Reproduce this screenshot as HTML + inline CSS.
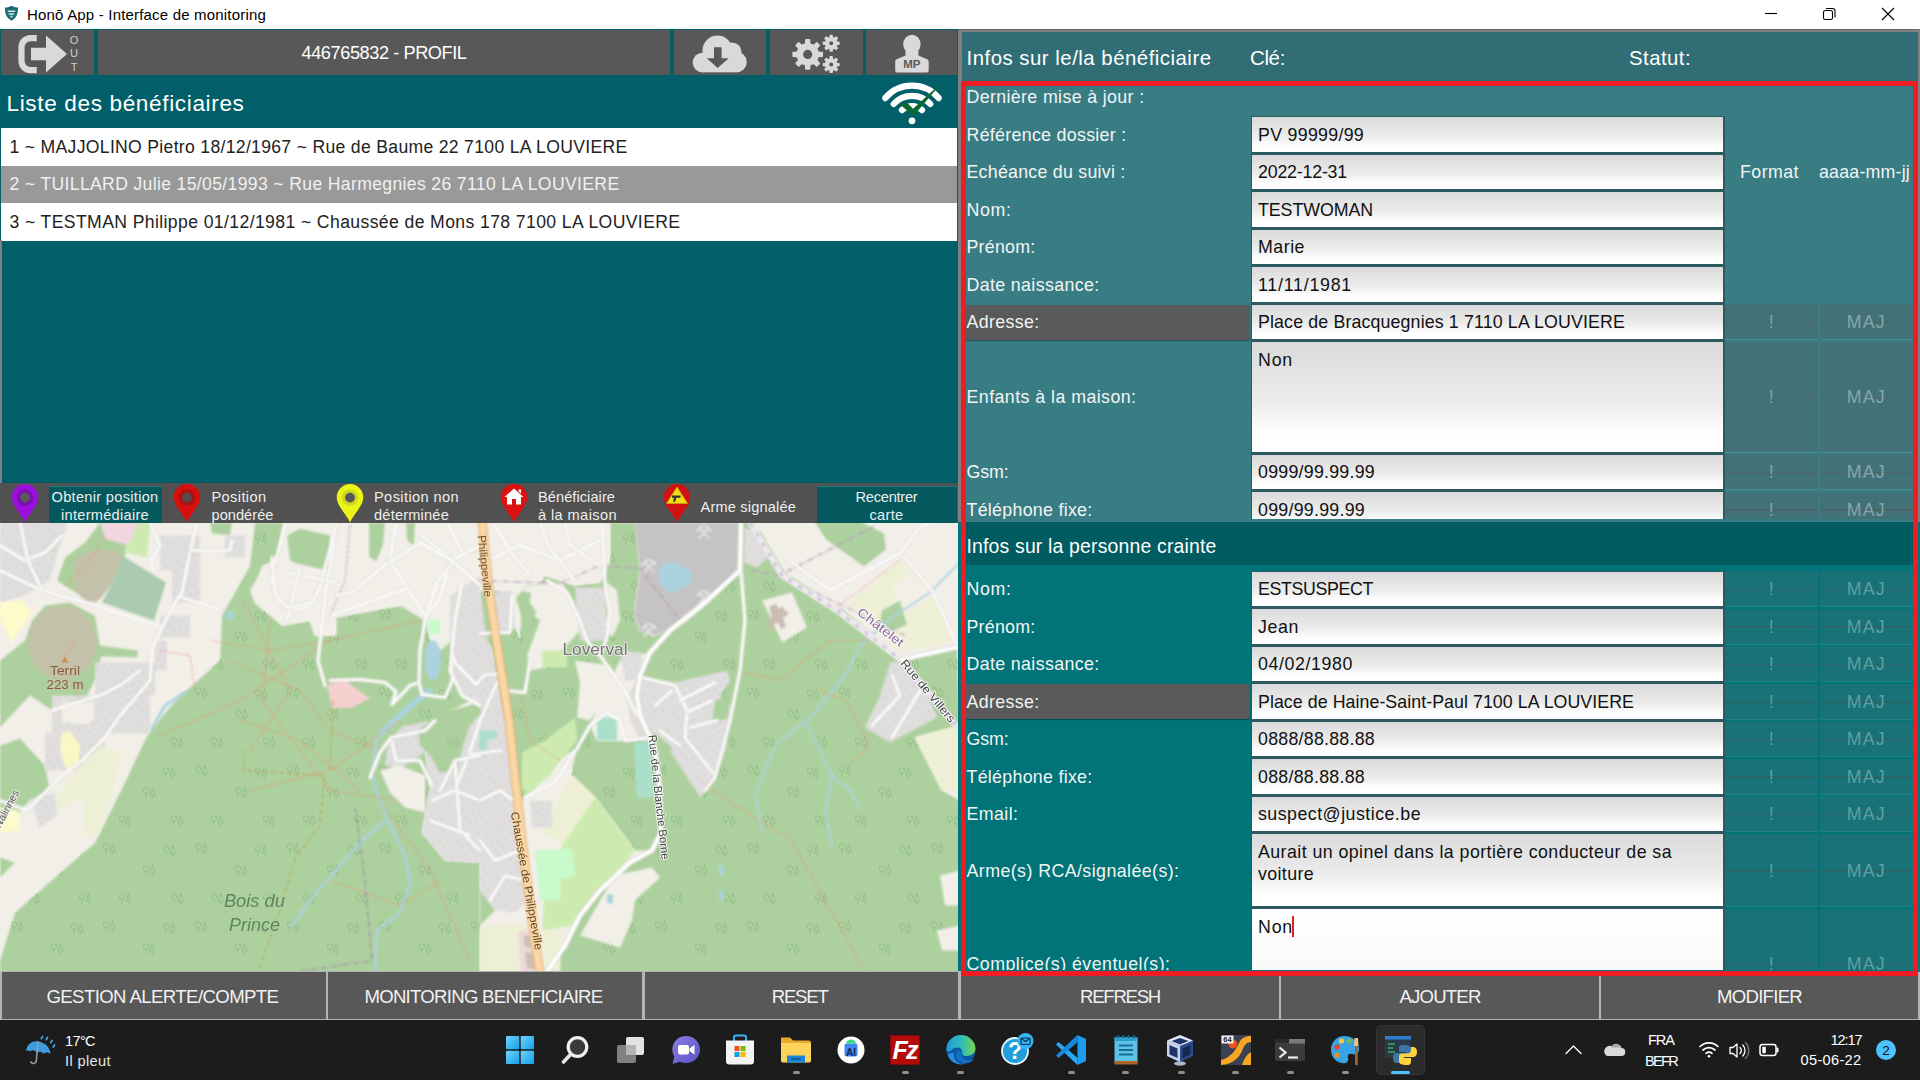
<!DOCTYPE html>
<html lang="fr"><head><meta charset="utf-8"><title>Honō App - Interface de monitoring</title>
<style>

html,body{margin:0;padding:0;background:#fff;}
body{width:1920px;height:1080px;overflow:hidden;font-family:"Liberation Sans",sans-serif;}
#root{position:relative;width:1920px;height:1080px;overflow:hidden;background:#005f69;}
.a{position:absolute;}
.t{position:absolute;white-space:nowrap;}
.g{background:#585858;}
.inp{position:absolute;left:1251px;width:473.500px;box-sizing:border-box;border:1px solid #2c5a60;border-bottom-width:2px;border-right-width:2px;background:linear-gradient(#dadada 0%,#ececec 55%,#ffffff 85%,#ffffff 100%);}
.mb{position:absolute;box-sizing:border-box;}
svg{position:absolute;display:block;}

</style></head><body>
<div id="root">
<div class="a" style="left:0;top:0;width:1920px;height:29px;background:#fff"></div>
<svg style="left:4.300px;top:4.800px" width="15" height="16.500" viewBox="0 0 16 17"><path d="M8 0.5 C10.5 2 13 2.4 15 2.4 C15 9 13.5 13.5 8 16.5 C2.500 13.5 1 9 1 2.4 C3 2.4 5.500 2 8 0.5Z" fill="#1d6b74"/><path d="M4 5.500h8v1.6H4zM5 8.6h6v1.400H5z" fill="#cfe6e8"/><circle cx="8" cy="12" r="1.2" fill="#cfe6e8"/></svg>
<span id="t0" class="t " style="font-size:15px;color:#000;top:6.30px;line-height:18.00px;letter-spacing:0.187px;left:27px;">Honō App - Interface de monitoring</span>
<svg style="left:1760px;top:0" width="160" height="29" viewBox="1760 0 160 29" fill="none" stroke="#000" stroke-width="1.1">
<path d="M1765 13.500H1777"/>
<rect x="1823.5" y="10.500" width="9" height="9" rx="1.800"/><path d="M1826 8.5h6.500a2.500 2.500 0 0 1 2.500 2.500v6.500"/>
<path d="M1882 8L1894 20M1894 8L1882 20"/></svg>
<div class="a g" style="left:1px;top:30px;width:93px;height:45px"></div>
<div class="a g" style="left:97.5px;top:30px;width:572.5px;height:45px"></div>
<div class="a g" style="left:673.5px;top:30px;width:92.5px;height:45px"></div>
<div class="a g" style="left:770px;top:30px;width:92.5px;height:45px"></div>
<div class="a g" style="left:865.5px;top:30px;width:91.5px;height:45px"></div>
<svg style="left:0;top:30px" width="100" height="46" viewBox="0 30 100 46">
<path d="M36.8 38.1H30.5a9 9 0 0 0 -9 9v14a9 9 0 0 0 9 9h6.3" fill="none" stroke="#d9d9d9" stroke-width="6.2"/>
<path d="M31 47.700H46V35.400L67 54L46 72.600V60.300H31Z" fill="#d9d9d9"/>
<g font-family="Liberation Sans,sans-serif" font-size="11" fill="#cfcfcf" text-anchor="middle"><text x="74" y="44">O</text><text x="74" y="57">U</text><text x="74" y="70.500">T</text></g></svg>
<span id="t1" class="t " style="font-size:18.2px;color:#fff;top:42.88px;line-height:21.84px;letter-spacing:-0.438px;left:384px;transform:translateX(-50%);">446765832 - PROFIL</span>
<svg style="left:680px;top:30px" width="90" height="46" viewBox="680 30 90 46">
<g fill="#d9d9d9"><circle cx="717.5" cy="50.500" r="15"/><circle cx="732" cy="52" r="9.500"/><circle cx="702.5" cy="62.500" r="9.800"/><circle cx="736.5" cy="62" r="10.300"/><rect x="702" y="55" width="35" height="17.300"/></g>
<path d="M714 47.300h7.600v11h7.200L717.600 68 706.800 58.300h7.200Z" fill="#585858"/></svg>
<svg style="left:780px;top:30px" width="80" height="46" viewBox="780 30 80 46"><path d="M805.7 44.0L805.9 39.9L809.5 39.9L809.7 44.0L813.7 45.6L816.7 42.9L819.2 45.4L816.5 48.4L818.1 52.4L822.2 52.6L822.2 56.2L818.1 56.4L816.5 60.4L819.2 63.4L816.7 65.9L813.7 63.2L809.7 64.8L809.5 68.9L805.9 68.9L805.7 64.8L801.7 63.2L798.7 65.9L796.2 63.4L798.9 60.4L797.3 56.4L793.2 56.2L793.2 52.6L797.3 52.4L798.9 48.4L796.2 45.4L798.7 42.9L801.7 45.6ZM813.1 54.4a5.4 5.4 0 1 0 -10.8 0a5.4 5.4 0 1 0 10.8 0Z" fill="#d9d9d9" fill-rule="evenodd" stroke="#d9d9d9" stroke-width="1.6" stroke-linejoin="round"/><path d="M830.2 37.7L830.3 35.5L832.1 35.5L832.2 37.7L834.4 38.6L836.0 37.1L837.3 38.4L835.8 40.0L836.7 42.2L838.9 42.3L838.9 44.1L836.7 44.2L835.8 46.4L837.3 48.0L836.0 49.3L834.4 47.8L832.2 48.7L832.1 50.9L830.3 50.9L830.2 48.7L828.0 47.8L826.4 49.3L825.1 48.0L826.6 46.4L825.7 44.2L823.5 44.1L823.5 42.3L825.7 42.2L826.6 40.0L825.1 38.4L826.4 37.1L828.0 38.6ZM834.0 43.2a2.8 2.8 0 1 0 -5.6 0a2.8 2.8 0 1 0 5.6 0Z" fill="#d9d9d9" fill-rule="evenodd" stroke="#d9d9d9" stroke-width="1.6" stroke-linejoin="round"/><path d="M830.2 59.1L830.3 56.9L832.1 56.9L832.2 59.1L834.4 60.0L836.0 58.5L837.3 59.8L835.8 61.4L836.7 63.6L838.9 63.7L838.9 65.5L836.7 65.6L835.8 67.8L837.3 69.4L836.0 70.7L834.4 69.2L832.2 70.1L832.1 72.3L830.3 72.3L830.2 70.1L828.0 69.2L826.4 70.7L825.1 69.4L826.6 67.8L825.7 65.6L823.5 65.5L823.5 63.7L825.7 63.6L826.6 61.4L825.1 59.8L826.4 58.5L828.0 60.0ZM834.0 64.6a2.8 2.8 0 1 0 -5.6 0a2.8 2.8 0 1 0 5.6 0Z" fill="#d9d9d9" fill-rule="evenodd" stroke="#d9d9d9" stroke-width="1.6" stroke-linejoin="round"/></svg>
<svg style="left:880px;top:30px" width="70" height="46" viewBox="880 30 70 46">
<g fill="#d9d9d9"><ellipse cx="911.9" cy="44.300" rx="8.700" ry="9.500"/><path d="M905.5 50v5.500l-8.300 3.500c-1.500 .6-2 1.500-2 3v8.500c0 1.200 .8 2 2 2h29.500c1.200 0 2-.8 2-2V62c0-1.500-.5-2.400-2-3l-8.300-3.500V50Z"/></g>
<text x="911.9" y="68.300" font-family="Liberation Sans,sans-serif" font-size="11.5" font-weight="bold" fill="#585858" text-anchor="middle">MP</text></svg>
<span id="t2" class="t " style="font-size:22.6px;color:#fff;top:90.24px;line-height:27.12px;letter-spacing:0.628px;left:6.5px;">Liste des bénéficiaires</span>
<svg style="left:875px;top:78px" width="75" height="50" viewBox="875 78 75 50"><g fill="none" stroke="#fff" stroke-width="6.200" stroke-linecap="round"><path d="M885.3 98.1A34.8 34.8 0 0 1 938.7 98.1"/><path d="M893.7 104.0A24.6 24.6 0 0 1 930.3 104.0"/><path d="M902.0 110.1A14.4 14.4 0 0 1 922.0 110.1"/></g><circle cx="912" cy="120.800" r="3.400" fill="#fff"/><path d="M900.3 104.800L907 102.600L913 108.800L942.800 81.500L913.500 116Z" fill="#0b6a2e"/></svg>
<div class="a" style="left:1px;top:128px;width:956px;height:37.700px;background:#fff"></div>
<div class="a" style="left:1px;top:165.700px;width:956px;height:37.500px;background:#999"></div>
<div class="a" style="left:1px;top:203.200px;width:956px;height:37.500px;background:#fff"></div>
<span id="t3" class="t " style="font-size:17.6px;color:#222;top:136.74px;line-height:21.12px;letter-spacing:0.310px;left:9.5px;">1 ~ MAJJOLINO Pietro 18/12/1967 ~ Rue de Baume 22 7100 LA LOUVIERE</span>
<span id="t4" class="t " style="font-size:17.6px;color:#f0f0f0;top:174.24px;line-height:21.12px;letter-spacing:0.346px;left:9.5px;">2 ~ TUILLARD Julie 15/05/1993 ~ Rue Harmegnies 26 7110 LA LOUVIERE</span>
<span id="t5" class="t " style="font-size:17.6px;color:#222;top:211.74px;line-height:21.12px;letter-spacing:0.391px;left:9.5px;">3 ~ TESTMAN Philippe 01/12/1981 ~ Chaussée de Mons 178 7100 LA LOUVIERE</span>
<div class="a" style="left:0;top:482.500px;width:957.500px;height:40.300px;background:#515151;box-shadow:0 1px 2px rgba(0,0,0,.5)"></div>
<svg style="left:10.5px;top:484px" width="28" height="39" viewBox="-14 0 28 39"><path d="M0 38.500C-3 31-13.300 22-13.300 13.300A13.300 13.300 0 0 1 13.300 13.300C13.300 22 3 31 0 38.500Z" fill="#9a0fdc"/><circle cx="0" cy="13.600" r="8.200" fill="#7a10b0"/><circle cx="0" cy="13.600" r="4.900" fill="#5a5a5a"/></svg>
<div class="a" style="left:49px;top:485.500px;width:113px;height:37px;background:#03595e;border-top:1px solid #147a7f;box-sizing:border-box"></div>
<span id="t6" class="t " style="font-size:14.6px;color:#eee;top:488.54px;line-height:17.52px;letter-spacing:0.299px;left:105px;transform:translateX(-50%);">Obtenir position</span>
<span id="t7" class="t " style="font-size:14.6px;color:#eee;top:507.04px;line-height:17.52px;letter-spacing:0.280px;left:105px;transform:translateX(-50%);">intermédiaire</span>
<svg style="left:173px;top:484px" width="28" height="39" viewBox="-14 0 28 39"><path d="M0 38.500C-3 31-13.300 22-13.300 13.300A13.300 13.300 0 0 1 13.300 13.300C13.300 22 3 31 0 38.500Z" fill="#d80f0f"/><circle cx="0" cy="13.600" r="8.200" fill="#a81414"/><circle cx="0" cy="13.600" r="4.900" fill="#5a4a4a"/></svg>
<span id="t8" class="t " style="font-size:14.6px;color:#eee;top:488.54px;line-height:17.52px;letter-spacing:0.385px;left:211.5px;">Position</span>
<span id="t9" class="t " style="font-size:14.6px;color:#eee;top:507.04px;line-height:17.52px;letter-spacing:0.039px;left:211.5px;">pondérée</span>
<svg style="left:336px;top:484px" width="28" height="39" viewBox="-14 0 28 39"><path d="M0 38.500C-3 31-13.300 22-13.300 13.300A13.300 13.300 0 0 1 13.300 13.300C13.300 22 3 31 0 38.500Z" fill="#eaf516"/><circle cx="0" cy="13.600" r="8.200" fill="#cfd820"/><circle cx="0" cy="13.600" r="4.900" fill="#555"/></svg>
<span id="t10" class="t " style="font-size:14.6px;color:#eee;top:488.54px;line-height:17.52px;letter-spacing:0.389px;left:374px;">Position non</span>
<span id="t11" class="t " style="font-size:14.6px;color:#eee;top:507.04px;line-height:17.52px;letter-spacing:0.198px;left:374px;">déterminée</span>
<svg style="left:499.5px;top:484px" width="28" height="39" viewBox="-14 0 28 39"><path d="M0 38.500C-3 31-13.300 22-13.300 13.300A13.300 13.300 0 0 1 13.300 13.300C13.300 22 3 31 0 38.500Z" fill="#dc1111"/><path d="M0 4.500L-9.500 13h2.500v7.500h5v-5.500h4v5.500h5V13h2.500Z" fill="#fff"/><path d="M4.500 5.500h2.500v4l-2.500-2.200Z" fill="#fff"/></svg>
<span id="t12" class="t " style="font-size:14.6px;color:#eee;top:488.54px;line-height:17.52px;letter-spacing:0.061px;left:538px;">Bénéficiaire</span>
<span id="t13" class="t " style="font-size:14.6px;color:#eee;top:507.04px;line-height:17.52px;letter-spacing:0.396px;left:538px;">à la maison</span>
<svg style="left:663px;top:484px" width="28" height="39" viewBox="-14 0 28 39"><path d="M0 38.500C-3 31-13.300 22-13.300 13.300A13.300 13.300 0 0 1 13.300 13.300C13.300 22 3 31 0 38.500Z" fill="#d01212"/><path d="M0 3L10.500 19.500H-10.500Z" fill="#f2dd12" stroke="#caa50a" stroke-width=".8"/><path d="M-5 11.500h8.500v2.200h-4.300l-1 4h-2.200l1-4h-2Z" fill="#333"/></svg>
<span id="t14" class="t " style="font-size:14.6px;color:#eee;top:498.54px;line-height:17.52px;letter-spacing:0.169px;left:700.5px;">Arme signalée</span>
<div class="a" style="left:817px;top:485.500px;width:140px;height:37px;background:#03595e;border-top:1px solid #147a7f;box-sizing:border-box"></div>
<span id="t15" class="t " style="font-size:14.6px;color:#eee;top:488.54px;line-height:17.52px;letter-spacing:-0.231px;left:886.5px;transform:translateX(-50%);">Recentrer</span>
<span id="t16" class="t " style="font-size:14.6px;color:#eee;top:507.04px;line-height:17.52px;letter-spacing:0.309px;left:886.5px;transform:translateX(-50%);">carte</span>
<div class="a" style="left:0;top:971px;width:1920px;height:49px;background:#b4b4b4"></div>
<div class="a" style="left:0;top:240px;width:2px;height:242.500px;background:#808080"></div>
<div class="a g" style="left:2px;top:972px;width:323.5px;height:46.500px"></div><span id="t17" class="t " style="font-size:18.6px;color:#f2f2f2;top:985.64px;line-height:22.32px;letter-spacing:-0.597px;left:162.45px;transform:translateX(-50%);">GESTION ALERTE/COMPTE</span>
<div class="a g" style="left:327.5px;top:972px;width:314.5px;height:46.500px"></div><span id="t18" class="t " style="font-size:18.6px;color:#f2f2f2;top:985.64px;line-height:22.32px;letter-spacing:-0.732px;left:483.45px;transform:translateX(-50%);">MONITORING BENEFICIAIRE</span>
<div class="a g" style="left:644.5px;top:972px;width:313.0px;height:46.500px"></div><span id="t19" class="t " style="font-size:18.6px;color:#f2f2f2;top:985.64px;line-height:22.32px;letter-spacing:-1.200px;left:799.7px;transform:translateX(-50%);">RESET</span>
<div class="a" style="left:0;top:522.500px;width:957.500px;height:448.500px;overflow:hidden;background:#f2efe9">
<svg style="left:-10px;top:-10px;" width="977.500" height="468.500" viewBox="-10 512.500 977.500 468.500">
<defs><pattern id="tr" width="92" height="78" patternUnits="userSpaceOnUse" patternTransform="translate(10 530)">
<g fill="none" stroke="#93bd89" stroke-width="0.950">
<g><circle cx="4" cy="4" r="2.800"/><path d="M4 6.800V11.500"/><path d="M10.500 0.500L8 9h5ZM10.500 9v2.500"/></g><g transform="translate(40 22)"><circle cx="4" cy="4" r="2.800"/><path d="M4 6.800V11.500"/><path d="M10.500 0.500L8 9h5ZM10.500 9v2.500"/></g><g transform="translate(68 50)"><circle cx="4" cy="4" r="2.800"/><path d="M4 6.800V11.500"/><path d="M10.500 0.500L8 9h5ZM10.500 9v2.500"/></g><g transform="translate(16 50)"><circle cx="4" cy="4" r="2.800"/><path d="M4 6.800V11.500"/><path d="M10.500 0.500L8 9h5ZM10.500 9v2.500"/></g><g transform="translate(60 2)"><circle cx="4" cy="4" r="2.800"/><path d="M4 6.800V11.500"/><path d="M10.500 0.500L8 9h5ZM10.500 9v2.500"/></g>
</g></pattern>
<pattern id="hs" width="11" height="9" patternUnits="userSpaceOnUse" patternTransform="rotate(18)"><rect x="1" y="1" width="2.400" height="1.800" fill="#d8cbc4"/><rect x="6.500" y="5" width="2.200" height="2" fill="#dacfc9"/></pattern>
<filter id="bl1" x="-2%" y="-2%" width="104%" height="104%"><feGaussianBlur stdDeviation="0.8"/></filter><filter id="bl2" x="-2%" y="-2%" width="104%" height="104%"><feGaussianBlur stdDeviation="0.4"/></filter>
</defs>
<g filter="url(#bl1)">
<rect x="-10" y="510" width="980" height="475" fill="#f2efe9"/>
<polygon points="255,522 283,522 278,557 265,565 250,590 255,603 282,625 310,620 315,635 335,635 335,617 362,612 400,605 425,620 430,640 440,650 452,640 470,650 480,640 480,590 500,590 520,640 522,600 517,602 527,585 540,584 545,575 560,580 575,585 600,582 610,560 610,522 636,522 640,570 634,615 640,630 655,635 687,620 720,590 735,570 741,552 741,522 752,522 782,575 837,610 850,600 880,585 900,600 905,612 902,657 957,647 960,725 915,737 942,790 960,800 960,975 547,975 565,945 580,915 600,890 630,862 652,850 661,832 659,782 655,750 650,737 640,715 637,695 640,675 650,652 620,660 600,700 590,725 572,757 575,750 562,755 525,797 521,800 512,760 500,700 492,650 487,640 470,700 452,710 440,740 425,750 430,787 422,832 445,860 480,862 480,975 0,975 0,960 15,912 95,842 100,832 125,782 140,750 150,730 180,695 190,687 220,660 222,615 235,592 250,565" fill="#add19e" />
<polygon points="575,750 590,725 597,740 650,740 655,750 659,782 661,832 652,850 635,850 595,797 572,775" fill="#add19e" />
<polygon points="57,580 65,557 85,542 100,522 132,522 125,555 117,570 100,595 75,592" fill="#add19e" />
<polygon points="32,620 45,605 70,602 95,615 100,645 138,650 137,657 101,656 99,668 95,680 82,705 52,710 30,695 0,727 0,660 25,640" fill="#add19e" />
<polygon points="0,745 20,738 45,765 50,790 30,800 15,815 0,812" fill="#add19e" />
<polygon points="0,857 15,862 0,877" fill="#add19e" />
<polygon points="287,535 300,528 330,535 330,568 305,572 290,560" fill="#add19e" />
<polygon points="405,560 425,550 440,565 430,590 410,585" fill="#add19e" />
<polygon points="372,580 385,575 392,598 378,600" fill="#add19e" />
<polygon points="210,522 232,522 230,535 212,533" fill="#add19e" />
<polygon points="814,520 858,520 884,533 886,549 864,566 826,539" fill="#add19e" />
<polygon points="882,610 900,600 907,624 892,631 880,620" fill="#add19e" />
<polygon points="760,560 782,575 800,590 792,592 762,600 772,620 782,642 807,627 815,640 750,660 745,620 741,570" fill="#add19e" />
</g><g>
<polygon points="255,522 283,522 278,557 265,565 250,590 255,603 282,625 310,620 315,635 335,635 335,617 362,612 400,605 425,620 430,640 440,650 452,640 470,650 480,640 480,590 500,590 520,640 522,600 517,602 527,585 540,584 545,575 560,580 575,585 600,582 610,560 610,522 636,522 640,570 634,615 640,630 655,635 687,620 720,590 735,570 741,552 741,522 752,522 782,575 837,610 850,600 880,585 900,600 905,612 902,657 957,647 960,725 915,737 942,790 960,800 960,975 547,975 565,945 580,915 600,890 630,862 652,850 661,832 659,782 655,750 650,737 640,715 637,695 640,675 650,652 620,660 600,700 590,725 572,757 575,750 562,755 525,797 521,800 512,760 500,700 492,650 487,640 470,700 452,710 440,740 425,750 430,787 422,832 445,860 480,862 480,975 0,975 0,960 15,912 95,842 100,832 125,782 140,750 150,730 180,695 190,687 220,660 222,615 235,592 250,565" fill="url(#tr)" />
<polygon points="575,750 590,725 597,740 650,740 655,750 659,782 661,832 652,850 635,850 595,797 572,775" fill="url(#tr)" />
</g><g filter="url(#bl1)">
<polygon points="132,522 150,522 147,557 125,552" fill="#cdebb0" />
<polygon points="0,602 22,600 32,612 12,642 0,620" fill="#fdfbc9" />
<polygon points="122,555 166,582 154,620 102,602 116,574" fill="#aacbaf" />
<path d="M77 557C90 548 112 545 122 556C118 575 105 595 97 601C88 603 76 596 75 585C73 575 74 565 77 557Z" fill="#c4c1aa"/>
<polygon points="100,522 138,522 128,545 105,538" fill="#f1d6e0" />
<ellipse cx="62" cy="642" rx="34" ry="37" fill="#c4c1aa"/>
<polygon points="0,522 68,522 58,552 50,580 25,595 0,602" fill="#e0dfdf" /><polygon points="0,522 68,522 58,552 50,580 25,595 0,602" fill="url(#hs)"/>
<rect x="160" y="535" width="40" height="35" fill="#e0dfdf"/><rect x="160" y="535" width="40" height="35" fill="url(#hs)"/>
<rect x="172" y="567" width="28" height="35" fill="#e0dfdf"/><rect x="172" y="567" width="28" height="35" fill="url(#hs)"/>
<rect x="160" y="615" width="30" height="22" fill="#e0dfdf"/><rect x="160" y="615" width="30" height="22" fill="url(#hs)"/>
<rect x="225" y="535" width="20" height="22" fill="#e0dfdf"/><rect x="225" y="535" width="20" height="22" fill="url(#hs)"/>
<rect x="95" y="662" width="60" height="33" fill="#e0dfdf"/><rect x="95" y="662" width="60" height="33" fill="url(#hs)"/>
<rect x="52" y="695" width="98" height="38" fill="#e0dfdf"/><rect x="52" y="695" width="98" height="38" fill="url(#hs)"/>
<rect x="45" y="732" width="60" height="38" fill="#e0dfdf"/><rect x="45" y="732" width="60" height="38" fill="url(#hs)"/>
<rect x="155" y="640" width="12" height="30" fill="#e0dfdf"/><rect x="155" y="640" width="12" height="30" fill="url(#hs)"/>
<polygon points="450,595 480,575 480,700 462,695 450,670" fill="#e0dfdf" /><polygon points="450,595 480,575 480,700 462,695 450,670" fill="url(#hs)"/>
<polygon points="455,715 480,700 480,790 440,790 455,745" fill="#e0dfdf" /><polygon points="455,715 480,700 480,790 440,790 455,745" fill="url(#hs)"/>
<polygon points="425,750 480,750 480,862 445,860 422,832 430,787" fill="#e0dfdf" /><polygon points="425,750 480,750 480,862 445,860 422,832 430,787" fill="url(#hs)"/>
<polygon points="388,742 402,726 452,716 480,700 480,760 425,752 400,768 385,765" fill="#e0dfdf" /><polygon points="388,742 402,726 452,716 480,700 480,760 425,752 400,768 385,765" fill="url(#hs)"/>
<polygon points="380,770 400,765 425,775 425,812 405,807 390,792" fill="#f2efe9" />
<polygon points="255,590 262,565 285,560 335,572 337,635 315,635 310,620 282,625" fill="#f2efe9" />
<polygon points="335,522 480,522 480,575 450,595 437,582 425,600 400,605 362,612 335,617" fill="#f2efe9" />
<polygon points="480,522 610,522 610,560 600,582 575,585 545,575 500,590 480,590" fill="#f2efe9" />
<polygon points="480,590 487,640 492,650 500,700 512,760 521,800 527,900 515,912 495,910 480,890" fill="#e0dfdf" /><polygon points="480,590 487,640 492,650 500,700 512,760 521,800 527,900 515,912 495,910 480,890" fill="url(#hs)"/>
<polygon points="480,925 530,925 540,975 480,975" fill="#eef0d5" />
<polygon points="480,890 495,910 480,925" fill="#add19e" />
<polygon points="418,730 440,712 470,705 477,700 482,712 470,725 463,745 458,768 440,772 430,755 420,745" fill="#add19e" />
<polygon points="418,730 440,712 470,705 477,700 482,712 470,725 463,745 458,768 440,772 430,755 420,745" fill="url(#tr)" />
<polygon points="479,730 497,730 497,738 488,739 486,750 479,750" fill="#aae0cb" />
<polygon points="527,585 562,582 575,602 580,630 562,650 557,665 530,670 527,655 540,620 517,602" fill="#f2efe9" />
<polygon points="575,587 605,587 607,640 580,640" fill="#e0dfdf" /><polygon points="575,587 605,587 607,640 580,640" fill="url(#hs)"/>
<polygon points="607,582 617,590 620,620 612,637 605,625 610,602" fill="#f2efe9" />
<polygon points="575,660 610,665 620,680 605,695 590,720 577,717 580,682" fill="#f2efe9" />
<polygon points="620,650 642,652 640,680 625,680" fill="#e0dfdf" /><polygon points="620,650 642,652 640,680 625,680" fill="url(#hs)"/>
<polygon points="542,650 567,650 567,667 542,667" fill="#cdebb0" />
<polygon points="545,740 575,717 577,740 555,767 522,790 522,752" fill="#cdebb0" />
<polygon points="595,690 620,688 622,740 597,740" fill="#f2efe9" />
<polygon points="597,717 617,717 617,740 597,740" fill="#aae0cb" />
<polygon points="634,742 650,742 654,797 637,797" fill="#aae0cb" />
<polygon points="640,675 675,682 727,670 730,680 720,695 730,705 727,745 715,780 700,797 670,745 655,732 640,740 630,720 627,695" fill="#e0dfdf" /><polygon points="640,675 675,682 727,670 730,680 720,695 730,705 727,745 715,780 700,797 670,745 655,732 640,740 630,720 627,695" fill="url(#hs)"/>
<polygon points="715,700 730,695 728,718 712,722" fill="#add19e" />
<polygon points="745,527 755,532 769,556 757,567 744,562" fill="#e0dfdf" /><polygon points="745,527 755,532 769,556 757,567 744,562" fill="url(#hs)"/>
<path d="M760 530L787 577L836 597L893 558" fill="none" stroke="#add19e" stroke-width="4.500" stroke-linejoin="round"/>
<polygon points="369,522 385,522 383,545 376,561 369,556" fill="#add19e" />
<polygon points="406,522 415,522 414,545 407,540" fill="#add19e" />
<polygon points="429,619 440,619 440,634 429,634" fill="#c8facc" />
<polygon points="492,592 513,590 515,628 497,632" fill="#e0dfdf" /><polygon points="492,592 513,590 515,628 497,632" fill="url(#hs)"/>
<polygon points="516,597 522,591 531,592 530,602 537,612 527,622 521,615" fill="#add19e" />
<polygon points="635,522 741,522 741,552 735,570 720,590 687,620 655,635 640,630 634,615 640,570" fill="#c5c3c3" />
<path d="M659 570C660 565 663 562 667 562C675 562 686 566 690 571C694 576 692 581 688 584C682 588 676 592 671 592C666 591 660 585 659 578Z" fill="#aad3df"/>
<g stroke="#e8e6e6" stroke-width="1.600" fill="none" stroke-linecap="round"><path d="M699 538L708 528M709 538L700 528"/><path d="M705.5 525.5L710.5 530M702.5 525.5L697.5 530" stroke-width="2.200"/></g>
<g stroke="#e8e6e6" stroke-width="1.600" fill="none" stroke-linecap="round"><path d="M644 572L653 562M654 572L645 562"/><path d="M650.5 559.5L655.5 564M647.5 559.5L642.5 564" stroke-width="2.200"/></g>
<g stroke="#e8e6e6" stroke-width="1.600" fill="none" stroke-linecap="round"><path d="M699 603L708 593M709 603L700 593"/><path d="M705.5 590.5L710.5 595M702.5 590.5L697.5 595" stroke-width="2.200"/></g>
<g stroke="#e8e6e6" stroke-width="1.600" fill="none" stroke-linecap="round"><path d="M644 636L653 626M654 636L645 626"/><path d="M650.5 623.5L655.5 628M647.5 623.5L642.5 628" stroke-width="2.200"/></g>
<polygon points="762,600 792,592 807,627 782,642 772,620" fill="#f2efe9" />
<polygon points="769,606 776,603 778,608 783,606 785,611 787,610 788,614 783,617 786,626 781,629 778,622 774,624 775,629 771,630 768,620 772,617" fill="#c9bcb1" />
<polygon points="755,522 960,522 960,647 902,657 840,607 785,572" fill="#f2efe9" />
<polygon points="814,520 858,520 884,533 886,549 864,566 826,539" fill="#add19e" />
<polygon points="847,604 900,561 911,570 935,595 956,640 901,652" fill="#eef0d5" />
<polygon points="893,585 910,572 935,595 905,612 897,600" fill="#f2efe9" />
<polygon points="882,610 900,600 907,624 892,631 880,620" fill="#add19e" />
<polygon points="915,737 960,725 960,790 942,790" fill="#eef0d5" />
<polygon points="925,750 960,750 960,795" fill="#eef0d5" />
<polygon points="890,662 905,660 930,700 937,717 890,742 865,727 880,695" fill="#e0dfdf" /><polygon points="890,662 905,660 930,700 937,717 890,742 865,727 880,695" fill="url(#hs)"/>
<polygon points="940,875 960,870 960,905 945,905" fill="#f2efe9" />
<polygon points="937,930 960,925 960,950 942,950" fill="#f2efe9" />
<polygon points="62,702 94,702 94,718 88,724 62,722" fill="#f2efe9" />
<polygon points="62,733 70,731 80,745 78,768 66,768 60,750" fill="#fbf8c4" />
<polygon points="100,747 122,750 120,765 85,760 95,752" fill="#eef0d5" />
<polygon points="72,775 85,760 120,765 100,832 85,837 82,795 45,822 57,795" fill="#eef0d5" />
<polygon points="30,800 55,792 57,815 40,827" fill="#e0dfdf" /><polygon points="30,800 55,792 57,815 40,827" fill="url(#hs)"/>
<polygon points="0,807 18,810 20,830 0,832" fill="#fdfbc9" />
<polygon points="522,755 562,755 550,775 525,795" fill="#cdebb0" />
<polygon points="572,775 595,797 562,845 540,832" fill="#eef0d5" />
<polygon points="595,797 635,850 625,862 592,895 575,925 542,930 545,890 562,845" fill="#cdebb0" />
<polygon points="530,800 552,800 552,827 532,827" fill="#e0dfdf" /><polygon points="530,800 552,800 552,827 532,827" fill="url(#hs)"/>
<polygon points="535,850 572,848 575,875 560,880 560,900 540,900" fill="#c8facc" />
<polygon points="542,930 562,930 560,975 547,975" fill="#eef0d5" />
<polygon points="615,875 652,867 660,877 635,900 632,920 620,947 580,935 600,900" fill="#f2efe9" />
<polygon points="670,750 720,750 712,777 700,797" fill="#e0dfdf" /><polygon points="670,750 720,750 712,777 700,797" fill="url(#hs)"/>
<polygon points="327,685 345,680 370,698 352,707 332,708" fill="#f6cfcf" />
<ellipse cx="433" cy="660" rx="8" ry="20" fill="#aad3df"/>
<rect x="226" y="611" width="8" height="8" fill="#aad3df"/>
<path d="M185 692 L165 705 L152 728" fill="none" stroke="#aad3df" stroke-width="3" stroke-linejoin="round" stroke-linecap="round"/>
<path d="M428 690 L420 697 L397 717 L382 732" fill="none" stroke="#aad3df" stroke-width="5.5" stroke-linejoin="round" stroke-linecap="round"/>
<path d="M432 690 L400 717 L377 737 L372 770 L375 787 L390 825 L405 855 L410 882 L400 912 L377 930 L375 971" fill="none" stroke="#aad3df" stroke-width="2.6" stroke-linejoin="round" stroke-linecap="round"/>
<path d="M385 821 L360 842 L312 897 L292 926" fill="none" stroke="#aad3df" stroke-width="2.6" stroke-linejoin="round" stroke-linecap="round"/>
<path d="M960 562 L930 592 L892 617 L860 645 L845 675 L812 715 L775 745 L757 790 L755 792 L762 830" fill="none" stroke="#aad3df" stroke-width="2" stroke-linejoin="round" stroke-linecap="round"/>
<path d="M805 720 L815 740 L832 775 L825 812 L832 845" fill="none" stroke="#aad3df" stroke-width="2" stroke-linejoin="round" stroke-linecap="round"/>
<path d="M832 775 L850 790 L860 807" fill="none" stroke="#aad3df" stroke-width="2" stroke-linejoin="round" stroke-linecap="round"/>
<ellipse cx="721" cy="870" rx="2.500" ry="6" fill="#aad3df"/><ellipse cx="721" cy="895" rx="3" ry="5" fill="#aad3df"/><rect x="607" y="894" width="6" height="9" fill="#aad3df"/>
<path d="M65 585 L90 560 L105 535" fill="none" stroke="#f2876f" stroke-width="1.15" stroke-dasharray="2 2.400" stroke-linejoin="round"/>
<path d="M80 700 L62 660 L75 640" fill="none" stroke="#f2876f" stroke-width="1.15" stroke-dasharray="2 2.400" stroke-linejoin="round"/>
<path d="M160 650 L190 655 L195 690" fill="none" stroke="#f2876f" stroke-width="1.15" stroke-dasharray="2 2.400" stroke-linejoin="round"/>
<path d="M212 640 L270 650 L330 640" fill="none" stroke="#f2876f" stroke-width="1.15" stroke-dasharray="2 2.400" stroke-linejoin="round"/>
<path d="M230 660 L300 690 L330 730 L380 750" fill="none" stroke="#f2876f" stroke-width="1.15" stroke-dasharray="2 2.400" stroke-linejoin="round"/>
<path d="M240 720 L300 740 L360 790" fill="none" stroke="#f2876f" stroke-width="1.15" stroke-dasharray="2 2.400" stroke-linejoin="round"/>
<path d="M160 735 L240 700 L330 640 L420 620" fill="none" stroke="#f2876f" stroke-width="1.15" stroke-dasharray="2 2.400" stroke-linejoin="round"/>
<path d="M250 790 L330 770 L400 720" fill="none" stroke="#f2876f" stroke-width="1.15" stroke-dasharray="2 2.400" stroke-linejoin="round"/>
<path d="M243 600 L290 690 L250 750" fill="none" stroke="#f2876f" stroke-width="1.15" stroke-dasharray="2 2.400" stroke-linejoin="round"/>
<path d="M270 620 L262 700 L330 790 L400 800" fill="none" stroke="#f2876f" stroke-width="1.15" stroke-dasharray="2 2.400" stroke-linejoin="round"/>
<path d="M705 785 L762 822 L790 838 L865 971" fill="none" stroke="#f2876f" stroke-width="1.15" stroke-dasharray="2 2.400" stroke-linejoin="round"/>
<path d="M745 672 L780 680 L830 640 L880 640" fill="none" stroke="#f2876f" stroke-width="1.15" stroke-dasharray="2 2.400" stroke-linejoin="round"/>
<path d="M820 690 L845 700 L870 745 L850 762" fill="none" stroke="#f2876f" stroke-width="1.15" stroke-dasharray="2 2.400" stroke-linejoin="round"/>
<path d="M520 690 L530 740 L560 760" fill="none" stroke="#f2876f" stroke-width="1.15" stroke-dasharray="2 2.400" stroke-linejoin="round"/>
<path d="M380 800 L430 870 L470 960" fill="none" stroke="#f2876f" stroke-width="1.15" stroke-dasharray="2 2.400" stroke-linejoin="round"/>
<path d="M330 880 L400 905 L440 880" fill="none" stroke="#f2876f" stroke-width="1.15" stroke-dasharray="2 2.400" stroke-linejoin="round"/>
<path d="M245 750 L243 770 L325 775 L320 825 L295 858 L280 910 L258 971" fill="none" stroke="#b5a55a" stroke-width="1.2" stroke-dasharray="5 3" stroke-linejoin="round"/>
<path d="M333 700 L330 770" fill="none" stroke="#b5a55a" stroke-width="1.2" stroke-dasharray="5 3" stroke-linejoin="round"/>
<path d="M480 580 L560 583 L600 565 L640 568 L680 620" fill="none" stroke="#b59ac0" stroke-width="1.3" stroke-dasharray="6 2 1.500 2" stroke-linejoin="round"/>
<path d="M752 570 L780 575 L905 635" fill="none" stroke="#b59ac0" stroke-width="1.3" stroke-dasharray="6 2 1.500 2" stroke-linejoin="round"/>
<path d="M787 571 L876 525" fill="none" stroke="#b59ac0" stroke-width="1.6" stroke-dasharray="6 2 1.500 2" stroke-linejoin="round"/>
<path d="M837 607 L901 559" fill="none" stroke="#f2876f" stroke-width="1.15" stroke-dasharray="2 2.400" stroke-linejoin="round"/>
<path d="M350 525 L345 580 L330 615" fill="none" stroke="#b59ac0" stroke-width="1.3" stroke-dasharray="3 2" stroke-linejoin="round"/>
<path d="M355 807 L365 880 L372 960 L300 971" fill="none" stroke="#9a86aa" stroke-width="1.3" stroke-dasharray="5 2 1.500 2" stroke-linejoin="round"/>
<path d="M0 570 L42 590 L95 605 L162 627" fill="none" stroke="#d6d2cc" stroke-width="3.9000000000000004" stroke-linejoin="round" stroke-linecap="round"/><path d="M0 570 L42 590 L95 605 L162 627" fill="none" stroke="#fff" stroke-width="2.7" stroke-linejoin="round" stroke-linecap="round"/>
<path d="M197 522 L190 552 L182 592 L175 602 L162 627 L152 650 L150 680 L140 692 L120 715 L105 737 L82 760 L62 775 L27 810 L0 800" fill="none" stroke="#d6d2cc" stroke-width="3.9000000000000004" stroke-linejoin="round" stroke-linecap="round"/><path d="M197 522 L190 552 L182 592 L175 602 L162 627 L152 650 L150 680 L140 692 L120 715 L105 737 L82 760 L62 775 L27 810 L0 800" fill="none" stroke="#fff" stroke-width="2.7" stroke-linejoin="round" stroke-linecap="round"/>
<path d="M182 597 L220 609" fill="none" stroke="#d6d2cc" stroke-width="3.9000000000000004" stroke-linejoin="round" stroke-linecap="round"/><path d="M182 597 L220 609" fill="none" stroke="#fff" stroke-width="2.7" stroke-linejoin="round" stroke-linecap="round"/>
<path d="M190 550 L230 550 L232 540" fill="none" stroke="#d6d2cc" stroke-width="3.9000000000000004" stroke-linejoin="round" stroke-linecap="round"/><path d="M190 550 L230 550 L232 540" fill="none" stroke="#fff" stroke-width="2.7" stroke-linejoin="round" stroke-linecap="round"/>
<path d="M150 522 L160 545 L150 562 L155 572" fill="none" stroke="#d6d2cc" stroke-width="3.9000000000000004" stroke-linejoin="round" stroke-linecap="round"/><path d="M150 522 L160 545 L150 562 L155 572" fill="none" stroke="#fff" stroke-width="2.7" stroke-linejoin="round" stroke-linecap="round"/>
<path d="M337 522 L331 560 L327 582 L322 625 L318 660 L325 685" fill="none" stroke="#d6d2cc" stroke-width="3.9000000000000004" stroke-linejoin="round" stroke-linecap="round"/><path d="M337 522 L331 560 L327 582 L322 625 L318 660 L325 685" fill="none" stroke="#fff" stroke-width="2.7" stroke-linejoin="round" stroke-linecap="round"/>
<path d="M286 522 L271 577 L277 600 L290 610 L310 606 L321 582 L336 527" fill="none" stroke="#d6d2cc" stroke-width="3.9000000000000004" stroke-linejoin="round" stroke-linecap="round"/><path d="M286 522 L271 577 L277 600 L290 610 L310 606 L321 582 L336 527" fill="none" stroke="#fff" stroke-width="2.7" stroke-linejoin="round" stroke-linecap="round"/>
<path d="M337 595 L352 592 L390 560 L396 522" fill="none" stroke="#d6d2cc" stroke-width="3.9000000000000004" stroke-linejoin="round" stroke-linecap="round"/><path d="M337 595 L352 592 L390 560 L396 522" fill="none" stroke="#fff" stroke-width="2.7" stroke-linejoin="round" stroke-linecap="round"/>
<path d="M390 561 L407 587 L426 617 L419 655" fill="none" stroke="#d6d2cc" stroke-width="3.9000000000000004" stroke-linejoin="round" stroke-linecap="round"/><path d="M390 561 L407 587 L426 617 L419 655" fill="none" stroke="#fff" stroke-width="2.7" stroke-linejoin="round" stroke-linecap="round"/>
<path d="M331 615 L407 588" fill="none" stroke="#d6d2cc" stroke-width="3.9000000000000004" stroke-linejoin="round" stroke-linecap="round"/><path d="M331 615 L407 588" fill="none" stroke="#fff" stroke-width="2.7" stroke-linejoin="round" stroke-linecap="round"/>
<path d="M426 617 L440 597 L452 557 L475 549" fill="none" stroke="#d6d2cc" stroke-width="3.9000000000000004" stroke-linejoin="round" stroke-linecap="round"/><path d="M426 617 L440 597 L452 557 L475 549" fill="none" stroke="#fff" stroke-width="2.7" stroke-linejoin="round" stroke-linecap="round"/>
<path d="M420 534 L452 559" fill="none" stroke="#d6d2cc" stroke-width="3.9000000000000004" stroke-linejoin="round" stroke-linecap="round"/><path d="M420 534 L452 559" fill="none" stroke="#fff" stroke-width="2.7" stroke-linejoin="round" stroke-linecap="round"/>
<path d="M447 522 L462 552" fill="none" stroke="#d6d2cc" stroke-width="3.9000000000000004" stroke-linejoin="round" stroke-linecap="round"/><path d="M447 522 L462 552" fill="none" stroke="#fff" stroke-width="2.7" stroke-linejoin="round" stroke-linecap="round"/>
<path d="M285 572 L337 582" fill="none" stroke="#d6d2cc" stroke-width="3.9000000000000004" stroke-linejoin="round" stroke-linecap="round"/><path d="M285 572 L337 582" fill="none" stroke="#fff" stroke-width="2.7" stroke-linejoin="round" stroke-linecap="round"/>
<path d="M300 567 L287 620" fill="none" stroke="#d6d2cc" stroke-width="3.9000000000000004" stroke-linejoin="round" stroke-linecap="round"/><path d="M300 567 L287 620" fill="none" stroke="#fff" stroke-width="2.7" stroke-linejoin="round" stroke-linecap="round"/>
<path d="M272 557 L275 592 L287 607 L312 602 L322 582" fill="none" stroke="#d6d2cc" stroke-width="3.9000000000000004" stroke-linejoin="round" stroke-linecap="round"/><path d="M272 557 L275 592 L287 607 L312 602 L322 582" fill="none" stroke="#fff" stroke-width="2.7" stroke-linejoin="round" stroke-linecap="round"/>
<path d="M330 680 L360 679 L385 682 L396 691 L392 704 L410 685 L419 682 L420 650 L425 620 L437 582 L457 557 L480 545" fill="none" stroke="#d6d2cc" stroke-width="3.9000000000000004" stroke-linejoin="round" stroke-linecap="round"/><path d="M330 680 L360 679 L385 682 L396 691 L392 704 L410 685 L419 682 L420 650 L425 620 L437 582 L457 557 L480 545" fill="none" stroke="#fff" stroke-width="2.7" stroke-linejoin="round" stroke-linecap="round"/>
<path d="M419 682 L422 694 L445 697 L452 681 L452 650" fill="none" stroke="#d6d2cc" stroke-width="3.9000000000000004" stroke-linejoin="round" stroke-linecap="round"/><path d="M419 682 L422 694 L445 697 L452 681 L452 650" fill="none" stroke="#fff" stroke-width="2.7" stroke-linejoin="round" stroke-linecap="round"/>
<path d="M452 650 L455 662 L476 684 L485 674 L496 674" fill="none" stroke="#d6d2cc" stroke-width="3.9000000000000004" stroke-linejoin="round" stroke-linecap="round"/><path d="M452 650 L455 662 L476 684 L485 674 L496 674" fill="none" stroke="#fff" stroke-width="2.7" stroke-linejoin="round" stroke-linecap="round"/>
<path d="M497 682 L480 720 L469 754 L457 785" fill="none" stroke="#d6d2cc" stroke-width="3.9000000000000004" stroke-linejoin="round" stroke-linecap="round"/><path d="M497 682 L480 720 L469 754 L457 785" fill="none" stroke="#fff" stroke-width="2.7" stroke-linejoin="round" stroke-linecap="round"/>
<path d="M469 754 L501 750" fill="none" stroke="#d6d2cc" stroke-width="3.9000000000000004" stroke-linejoin="round" stroke-linecap="round"/><path d="M469 754 L501 750" fill="none" stroke="#fff" stroke-width="2.7" stroke-linejoin="round" stroke-linecap="round"/>
<path d="M391 737 L425 730 L435 720" fill="none" stroke="#d6d2cc" stroke-width="3.9000000000000004" stroke-linejoin="round" stroke-linecap="round"/><path d="M391 737 L425 730 L435 720" fill="none" stroke="#fff" stroke-width="2.7" stroke-linejoin="round" stroke-linecap="round"/>
<path d="M391 737 L396 760 L420 760 L432 785" fill="none" stroke="#d6d2cc" stroke-width="3.9000000000000004" stroke-linejoin="round" stroke-linecap="round"/><path d="M391 737 L396 760 L420 760 L432 785" fill="none" stroke="#fff" stroke-width="2.7" stroke-linejoin="round" stroke-linecap="round"/>
<path d="M391 737 L380 752 L370 777" fill="none" stroke="#d6d2cc" stroke-width="3.9000000000000004" stroke-linejoin="round" stroke-linecap="round"/><path d="M391 737 L380 752 L370 777" fill="none" stroke="#fff" stroke-width="2.7" stroke-linejoin="round" stroke-linecap="round"/>
<path d="M390 562 L420 542 L452 560 L480 585" fill="none" stroke="#d6d2cc" stroke-width="3.9000000000000004" stroke-linejoin="round" stroke-linecap="round"/><path d="M390 562 L420 542 L452 560 L480 585" fill="none" stroke="#fff" stroke-width="2.7" stroke-linejoin="round" stroke-linecap="round"/>
<path d="M462 582 L455 620 L450 670 L462 695 L480 705" fill="none" stroke="#d6d2cc" stroke-width="3.9000000000000004" stroke-linejoin="round" stroke-linecap="round"/><path d="M462 582 L455 620 L450 670 L462 695 L480 705" fill="none" stroke="#fff" stroke-width="2.7" stroke-linejoin="round" stroke-linecap="round"/>
<path d="M52 710 L100 695 L120 685 L140 670" fill="none" stroke="#d6d2cc" stroke-width="3.9000000000000004" stroke-linejoin="round" stroke-linecap="round"/><path d="M52 710 L100 695 L120 685 L140 670" fill="none" stroke="#fff" stroke-width="2.7" stroke-linejoin="round" stroke-linecap="round"/>
<path d="M0 545 L25 560 L45 552 L62 535" fill="none" stroke="#d6d2cc" stroke-width="3.9000000000000004" stroke-linejoin="round" stroke-linecap="round"/><path d="M0 545 L25 560 L45 552 L62 535" fill="none" stroke="#fff" stroke-width="2.7" stroke-linejoin="round" stroke-linecap="round"/>
<path d="M20 522 L28 560 L42 590" fill="none" stroke="#d6d2cc" stroke-width="3.9000000000000004" stroke-linejoin="round" stroke-linecap="round"/><path d="M20 522 L28 560 L42 590" fill="none" stroke="#fff" stroke-width="2.7" stroke-linejoin="round" stroke-linecap="round"/>
<path d="M440 790 L455 760 L480 755" fill="none" stroke="#d6d2cc" stroke-width="3.9000000000000004" stroke-linejoin="round" stroke-linecap="round"/><path d="M440 790 L455 760 L480 755" fill="none" stroke="#fff" stroke-width="2.7" stroke-linejoin="round" stroke-linecap="round"/>
<path d="M432 800 L455 790 L480 800" fill="none" stroke="#d6d2cc" stroke-width="3.9000000000000004" stroke-linejoin="round" stroke-linecap="round"/><path d="M432 800 L455 790 L480 800" fill="none" stroke="#fff" stroke-width="2.7" stroke-linejoin="round" stroke-linecap="round"/>
<path d="M455 760 L460 830 L480 850" fill="none" stroke="#d6d2cc" stroke-width="3.9000000000000004" stroke-linejoin="round" stroke-linecap="round"/><path d="M455 760 L460 830 L480 850" fill="none" stroke="#fff" stroke-width="2.7" stroke-linejoin="round" stroke-linecap="round"/>
<path d="M430 820 L470 835" fill="none" stroke="#d6d2cc" stroke-width="3.9000000000000004" stroke-linejoin="round" stroke-linecap="round"/><path d="M430 820 L470 835" fill="none" stroke="#fff" stroke-width="2.7" stroke-linejoin="round" stroke-linecap="round"/>
<path d="M602 522 L605 582 L610 615 L607 637 L600 655" fill="none" stroke="#d6d2cc" stroke-width="3.9000000000000004" stroke-linejoin="round" stroke-linecap="round"/><path d="M602 522 L605 582 L610 615 L607 637 L600 655" fill="none" stroke="#fff" stroke-width="2.7" stroke-linejoin="round" stroke-linecap="round"/>
<path d="M547 580 L567 592 L580 620 L587 640 L600 655 L625 690 L637 715" fill="none" stroke="#d6d2cc" stroke-width="3.9000000000000004" stroke-linejoin="round" stroke-linecap="round"/><path d="M547 580 L567 592 L580 620 L587 640 L600 655 L625 690 L637 715" fill="none" stroke="#fff" stroke-width="2.7" stroke-linejoin="round" stroke-linecap="round"/>
<path d="M487 560 L520 545 L560 560 L600 540" fill="none" stroke="#d6d2cc" stroke-width="3.9000000000000004" stroke-linejoin="round" stroke-linecap="round"/><path d="M487 560 L520 545 L560 560 L600 540" fill="none" stroke="#fff" stroke-width="2.7" stroke-linejoin="round" stroke-linecap="round"/>
<path d="M495 525 L510 550 L530 575" fill="none" stroke="#d6d2cc" stroke-width="3.9000000000000004" stroke-linejoin="round" stroke-linecap="round"/><path d="M495 525 L510 550 L530 575" fill="none" stroke="#fff" stroke-width="2.7" stroke-linejoin="round" stroke-linecap="round"/>
<path d="M540 522 L548 545 L575 580" fill="none" stroke="#d6d2cc" stroke-width="3.9000000000000004" stroke-linejoin="round" stroke-linecap="round"/><path d="M540 522 L548 545 L575 580" fill="none" stroke="#fff" stroke-width="2.7" stroke-linejoin="round" stroke-linecap="round"/>
<path d="M565 522 L570 545 L600 565" fill="none" stroke="#d6d2cc" stroke-width="3.9000000000000004" stroke-linejoin="round" stroke-linecap="round"/><path d="M565 522 L570 545 L600 565" fill="none" stroke="#fff" stroke-width="2.7" stroke-linejoin="round" stroke-linecap="round"/>
<path d="M480 633 L510 632 L512 594" fill="none" stroke="#d6d2cc" stroke-width="3.9000000000000004" stroke-linejoin="round" stroke-linecap="round"/><path d="M480 633 L510 632 L512 594" fill="none" stroke="#fff" stroke-width="2.7" stroke-linejoin="round" stroke-linecap="round"/>
<path d="M505 690 L525 692 L530 660" fill="none" stroke="#d6d2cc" stroke-width="3.9000000000000004" stroke-linejoin="round" stroke-linecap="round"/><path d="M505 690 L525 692 L530 660" fill="none" stroke="#fff" stroke-width="2.7" stroke-linejoin="round" stroke-linecap="round"/>
<path d="M572 757 L590 725 L607 712 L620 720 L625 740 L650 737" fill="none" stroke="#d6d2cc" stroke-width="3.9000000000000004" stroke-linejoin="round" stroke-linecap="round"/><path d="M572 757 L590 725 L607 712 L620 720 L625 740 L650 737" fill="none" stroke="#fff" stroke-width="2.7" stroke-linejoin="round" stroke-linecap="round"/>
<path d="M642 677 L675 685 L687 710 L685 737 L715 775" fill="none" stroke="#d6d2cc" stroke-width="3.9000000000000004" stroke-linejoin="round" stroke-linecap="round"/><path d="M642 677 L675 685 L687 710 L685 737 L715 775" fill="none" stroke="#fff" stroke-width="2.7" stroke-linejoin="round" stroke-linecap="round"/>
<path d="M680 700 L715 682" fill="none" stroke="#d6d2cc" stroke-width="3.9000000000000004" stroke-linejoin="round" stroke-linecap="round"/><path d="M680 700 L715 682" fill="none" stroke="#fff" stroke-width="2.7" stroke-linejoin="round" stroke-linecap="round"/>
<path d="M687 712 L712 700" fill="none" stroke="#d6d2cc" stroke-width="3.9000000000000004" stroke-linejoin="round" stroke-linecap="round"/><path d="M687 712 L712 700" fill="none" stroke="#fff" stroke-width="2.7" stroke-linejoin="round" stroke-linecap="round"/>
<path d="M690 727 L717 720" fill="none" stroke="#d6d2cc" stroke-width="3.9000000000000004" stroke-linejoin="round" stroke-linecap="round"/><path d="M690 727 L717 720" fill="none" stroke="#fff" stroke-width="2.7" stroke-linejoin="round" stroke-linecap="round"/>
<path d="M655 705 L672 690" fill="none" stroke="#d6d2cc" stroke-width="3.9000000000000004" stroke-linejoin="round" stroke-linecap="round"/><path d="M655 705 L672 690" fill="none" stroke="#fff" stroke-width="2.7" stroke-linejoin="round" stroke-linecap="round"/>
<path d="M660 730 L680 745" fill="none" stroke="#d6d2cc" stroke-width="3.9000000000000004" stroke-linejoin="round" stroke-linecap="round"/><path d="M660 730 L680 745" fill="none" stroke="#fff" stroke-width="2.7" stroke-linejoin="round" stroke-linecap="round"/>
<path d="M741 570 L745 620 L740 670 L730 720 L715 777 L705 790" fill="none" stroke="#d6d2cc" stroke-width="3.9000000000000004" stroke-linejoin="round" stroke-linecap="round"/><path d="M741 570 L745 620 L740 670 L730 720 L715 777 L705 790" fill="none" stroke="#fff" stroke-width="2.7" stroke-linejoin="round" stroke-linecap="round"/>
<path d="M791 561 L830 590 L901 552 L920 526 L935 522" fill="none" stroke="#d6d2cc" stroke-width="3.9000000000000004" stroke-linejoin="round" stroke-linecap="round"/><path d="M791 561 L830 590 L901 552 L920 526 L935 522" fill="none" stroke="#fff" stroke-width="2.7" stroke-linejoin="round" stroke-linecap="round"/>
<path d="M904 556 L932 590 L957 645" fill="none" stroke="#d6d2cc" stroke-width="3.9000000000000004" stroke-linejoin="round" stroke-linecap="round"/><path d="M904 556 L932 590 L957 645" fill="none" stroke="#fff" stroke-width="2.7" stroke-linejoin="round" stroke-linecap="round"/>
<path d="M892 675 L900 695 L872 725" fill="none" stroke="#d6d2cc" stroke-width="3.9000000000000004" stroke-linejoin="round" stroke-linecap="round"/><path d="M892 675 L900 695 L872 725" fill="none" stroke="#fff" stroke-width="2.7" stroke-linejoin="round" stroke-linecap="round"/>
<path d="M920 690 L892 737" fill="none" stroke="#d6d2cc" stroke-width="3.9000000000000004" stroke-linejoin="round" stroke-linecap="round"/><path d="M920 690 L892 737" fill="none" stroke="#fff" stroke-width="2.7" stroke-linejoin="round" stroke-linecap="round"/>
<path d="M525 797 L555 782 L575 750" fill="none" stroke="#d6d2cc" stroke-width="3.9000000000000004" stroke-linejoin="round" stroke-linecap="round"/><path d="M525 797 L555 782 L575 750" fill="none" stroke="#fff" stroke-width="2.7" stroke-linejoin="round" stroke-linecap="round"/>
<path d="M480 800 L500 790 L520 805" fill="none" stroke="#d6d2cc" stroke-width="3.9000000000000004" stroke-linejoin="round" stroke-linecap="round"/><path d="M480 800 L500 790 L520 805" fill="none" stroke="#fff" stroke-width="2.7" stroke-linejoin="round" stroke-linecap="round"/>
<path d="M480 840 L495 860 L520 850" fill="none" stroke="#d6d2cc" stroke-width="3.9000000000000004" stroke-linejoin="round" stroke-linecap="round"/><path d="M480 840 L495 860 L520 850" fill="none" stroke="#fff" stroke-width="2.7" stroke-linejoin="round" stroke-linecap="round"/>
<path d="M490 900 L505 875 L525 880" fill="none" stroke="#d6d2cc" stroke-width="3.9000000000000004" stroke-linejoin="round" stroke-linecap="round"/><path d="M490 900 L505 875 L525 880" fill="none" stroke="#fff" stroke-width="2.7" stroke-linejoin="round" stroke-linecap="round"/>
<path d="M741 522 L740 570 L705 602 L670 630 L650 652 L640 675 L637 695 L640 715 L650 737 L655 750 L659 782 L661 832 L652 850 L630 862 L600 890 L580 915 L565 945 L547 971" fill="none" stroke="#cfcbc4" stroke-width="5.6" stroke-linejoin="round" stroke-linecap="round"/><path d="M741 522 L740 570 L705 602 L670 630 L650 652 L640 675 L637 695 L640 715 L650 737 L655 750 L659 782 L661 832 L652 850 L630 862 L600 890 L580 915 L565 945 L547 971" fill="none" stroke="#fff" stroke-width="4.2" stroke-linejoin="round" stroke-linecap="round"/>
<path d="M750 522 L782 575 L837 610 L902 660 L960 730" fill="none" stroke="#cfcbc4" stroke-width="6.199999999999999" stroke-linejoin="round" stroke-linecap="round"/><path d="M750 522 L782 575 L837 610 L902 660 L960 730" fill="none" stroke="#fff" stroke-width="4.8" stroke-linejoin="round" stroke-linecap="round"/>
<path d="M750 522 L782 575 L837 610 L902 660 L960 730" fill="none" stroke="#b08cc0" stroke-width="1.7" stroke-dasharray="6 2 1.500 2" stroke-linejoin="round"/>
<path d="M902 659 L960 646" fill="none" stroke="#cfcbc4" stroke-width="5.6" stroke-linejoin="round" stroke-linecap="round"/><path d="M902 659 L960 646" fill="none" stroke="#fff" stroke-width="4.2" stroke-linejoin="round" stroke-linecap="round"/>
<polygon points="518,930 531,930 538,975 521,975" fill="#ecd9d8" />
<polygon points="523,935 529,935 531,947 525,947" fill="#cdbfb5" />
<polygon points="525,952 532,952 535,968 527,968" fill="#cdbfb5" />
<path d="M482 520 L489 590 L498 650 L509 720 L516 785 L522 840 L527 880 L533 925 L540 975" fill="none" stroke="#d9a65c" stroke-width="9.200000000000001" stroke-linejoin="round" stroke-linecap="round"/><path d="M482 520 L489 590 L498 650 L509 720 L516 785 L522 840 L527 880 L533 925 L540 975" fill="none" stroke="#fcd6a4" stroke-width="7.4" stroke-linejoin="round" stroke-linecap="round"/>
</g><g filter="url(#bl2)">
<path d="M61.500 662h7L65 656Z" fill="#d08f55"/>
<text x="65" y="674" text-anchor="middle" font-family="Liberation Sans,DejaVu Sans,sans-serif" font-size="13" fill="#8a5a3c" stroke="#c4c1aa" stroke-width="2" paint-order="stroke" stroke-linejoin="round" stroke-opacity=".75" textLength="30" lengthAdjust="spacingAndGlyphs">Terril</text>
<text x="65" y="688.5" text-anchor="middle" font-family="Liberation Sans,DejaVu Sans,sans-serif" font-size="13" fill="#8a5a3c" stroke="#c4c1aa" stroke-width="2" paint-order="stroke" stroke-linejoin="round" stroke-opacity=".75" textLength="37" lengthAdjust="spacingAndGlyphs">223 m</text>
<text x="595" y="654.5" text-anchor="middle" font-family="Liberation Sans,DejaVu Sans,sans-serif" font-size="16" fill="#777" stroke="#f2efe9" stroke-width="2" paint-order="stroke" stroke-linejoin="round" stroke-opacity=".75" textLength="65" lengthAdjust="spacingAndGlyphs">Loverval</text>
<text x="254.4" y="906.5" text-anchor="middle" font-family="Liberation Sans,DejaVu Sans,sans-serif" font-size="19" fill="#5e8560" stroke="#add19e" stroke-width="2" paint-order="stroke" stroke-linejoin="round" stroke-opacity=".75" font-style="italic" textLength="61" lengthAdjust="spacingAndGlyphs">Bois du</text>
<text x="254.4" y="930" text-anchor="middle" font-family="Liberation Sans,DejaVu Sans,sans-serif" font-size="19" fill="#5e8560" stroke="#add19e" stroke-width="2" paint-order="stroke" stroke-linejoin="round" stroke-opacity=".75" font-style="italic" textLength="51" lengthAdjust="spacingAndGlyphs">Prince</text>
<text x="878" y="630" text-anchor="middle" font-family="Liberation Sans,DejaVu Sans,sans-serif" font-size="12.5" fill="#8d6aa0" stroke="#fff" stroke-width="2" paint-order="stroke" stroke-linejoin="round" stroke-opacity=".75" textLength="55" lengthAdjust="spacingAndGlyphs" transform="rotate(37.6 878 630)">Châtelet</text>
<text x="925" y="693" text-anchor="middle" font-family="Liberation Sans,DejaVu Sans,sans-serif" font-size="11.5" fill="#444" stroke="#fff" stroke-width="2" paint-order="stroke" stroke-linejoin="round" stroke-opacity=".75" textLength="78" lengthAdjust="spacingAndGlyphs" transform="rotate(50 925 693)">Rue de Villers</text>
<text x="481" y="566" text-anchor="middle" font-family="Liberation Sans,DejaVu Sans,sans-serif" font-size="11.5" fill="#5a4a2a" stroke="#fcd6a4" stroke-width="2" paint-order="stroke" stroke-linejoin="round" stroke-opacity=".75" textLength="62" lengthAdjust="spacingAndGlyphs" transform="rotate(84 481 566)">Philippeville</text>
<text x="523" y="881" text-anchor="middle" font-family="Liberation Sans,DejaVu Sans,sans-serif" font-size="11.5" fill="#5a4a2a" stroke="#fcd6a4" stroke-width="2" paint-order="stroke" stroke-linejoin="round" stroke-opacity=".75" textLength="140" lengthAdjust="spacingAndGlyphs" transform="rotate(80 523 881)">Chaussée de Philippeville</text>
<text x="655" y="797" text-anchor="middle" font-family="Liberation Sans,DejaVu Sans,sans-serif" font-size="11.5" fill="#444" stroke="#fff" stroke-width="2" paint-order="stroke" stroke-linejoin="round" stroke-opacity=".75" textLength="125" lengthAdjust="spacingAndGlyphs" transform="rotate(84 655 797)">Rue de la Blanche Borne</text>
<text x="10" y="810" text-anchor="middle" font-family="Liberation Sans,DejaVu Sans,sans-serif" font-size="10.5" fill="#444" stroke="#fff" stroke-width="2" paint-order="stroke" stroke-linejoin="round" stroke-opacity=".75" transform="rotate(-62 10 810)">Nalinnes</text>
</g></svg></div>
<div class="a" style="left:957.500px;top:29px;width:962.500px;height:3px;background:linear-gradient(#696969 0,#696969 1px,#808080 1px)"></div>
<div class="a" style="left:957.500px;top:30px;width:4px;height:491.500px;background:#808080"></div>
<div class="a" style="left:957.500px;top:521.500px;width:4px;height:449.500px;background:#007478"></div>
<div class="a" style="left:1918px;top:29px;width:2px;height:492.500px;background:#808080"></div>
<div class="a" style="left:1918px;top:521.500px;width:2px;height:450px;background:#007478"></div>
<div class="a" style="left:962px;top:32px;width:956px;height:49px;background:#306d75"></div>
<span id="t20" class="t " style="font-size:20.4px;color:#fff;top:45.56px;line-height:24.48px;letter-spacing:0.492px;left:966.5px;">Infos sur le/la bénéficiaire</span>
<span id="t21" class="t " style="font-size:20.4px;color:#fff;top:45.56px;line-height:24.48px;letter-spacing:-0.316px;left:1250px;">Clé:</span>
<span id="t22" class="t " style="font-size:20.4px;color:#fff;top:45.56px;line-height:24.48px;letter-spacing:0.435px;left:1629px;">Statut:</span>
<div class="a" style="left:962px;top:81px;width:956px;height:441px;background:#387d84"></div>
<div class="a" style="left:962px;top:521.500px;width:956px;height:43.200px;background:#005c60"></div>
<div class="a" style="left:962px;top:564.700px;width:956px;height:411px;background:#007478"></div>
<div class="a" style="left:966px;top:86px;width:947px;height:432.500px;overflow:hidden">
<div class="a" style="left:-966px;top:-86px;width:1920px;height:1080px">
<span id="t23" class="t " style="font-size:17.8px;color:#f4f4f4;top:87.37px;line-height:21.36px;letter-spacing:0.364px;left:966.5px;">Dernière mise à jour :</span>
<span id="t24" class="t " style="font-size:17.8px;color:#f4f4f4;top:124.87px;line-height:21.36px;letter-spacing:0.306px;left:966.5px;">Référence dossier :</span>
<div class="inp" style="top:116.0px;height:37.5px;"></div><span id="t25" class="t " style="font-size:17.8px;color:#111;top:124.62px;line-height:21.36px;letter-spacing:0.288px;left:1258px;">PV 99999/99</span>
<span id="t26" class="t " style="font-size:17.8px;color:#f4f4f4;top:162.37px;line-height:21.36px;letter-spacing:0.252px;left:966.5px;">Echéance du suivi :</span>
<div class="inp" style="top:153.5px;height:37.5px;"></div><span id="t27" class="t " style="font-size:17.8px;color:#111;top:162.12px;line-height:21.36px;letter-spacing:-0.197px;left:1258px;">2022-12-31</span>
<span id="t28" class="t " style="font-size:17.8px;color:#f4f4f4;top:199.87px;line-height:21.36px;letter-spacing:0.629px;left:966.5px;">Nom:</span>
<div class="inp" style="top:191.0px;height:37.5px;"></div><span id="t29" class="t " style="font-size:17.8px;color:#111;top:199.62px;line-height:21.36px;letter-spacing:-0.064px;left:1258px;">TESTWOMAN</span>
<span id="t30" class="t " style="font-size:17.8px;color:#f4f4f4;top:237.37px;line-height:21.36px;letter-spacing:0.257px;left:966.5px;">Prénom:</span>
<div class="inp" style="top:228.5px;height:37.5px;"></div><span id="t31" class="t " style="font-size:17.8px;color:#111;top:237.12px;line-height:21.36px;letter-spacing:0.506px;left:1258px;">Marie</span>
<span id="t32" class="t " style="font-size:17.8px;color:#f4f4f4;top:274.87px;line-height:21.36px;letter-spacing:0.366px;left:966.5px;">Date naissance:</span>
<div class="inp" style="top:266.0px;height:37.5px;"></div><span id="t33" class="t " style="font-size:17.8px;color:#111;top:274.62px;line-height:21.36px;letter-spacing:0.764px;left:1258px;">11/11/1981</span>
<div class="a" style="left:966px;top:304.5px;width:284px;height:35px;background:#5a5a5a;border-radius:2px;box-shadow:0 1px 1px rgba(0,0,0,.35)"></div>
<span id="t34" class="t " style="font-size:17.8px;color:#f4f4f4;top:312.37px;line-height:21.36px;letter-spacing:0.354px;left:966.5px;">Adresse:</span>
<div class="inp" style="top:303.5px;height:37.5px;"></div><span id="t35" class="t " style="font-size:17.8px;color:#111;top:312.12px;line-height:21.36px;letter-spacing:0.139px;left:1258px;">Place de Bracquegnies 1 7110 LA LOUVIERE</span>
<div class="mb" style="left:1725px;top:304.0px;width:92.5px;height:35.0px;background:#427278;border-radius:2px;box-shadow:0 1px 0 #4a8d93"></div><div class="a" style="left:1726px;top:321.8px;width:90.5px;height:1.500px;background:#4d6468"></div><span id="t36" class="t " style="font-size:17.8px;color:#86a5a9;top:312.37px;line-height:21.36px;left:1771.25px;transform:translateX(-50%);">!</span><div class="mb" style="left:1820px;top:304.0px;width:92.5px;height:35.0px;background:#427278;border-radius:2px;box-shadow:0 1px 0 #4a8d93"></div><div class="a" style="left:1821px;top:321.8px;width:90.5px;height:1.500px;background:#4d6468"></div><span id="t37" class="t " style="font-size:17.8px;color:#86a5a9;top:312.37px;line-height:21.36px;letter-spacing:1.146px;left:1866.25px;transform:translateX(-50%);">MAJ</span>
<span id="t38" class="t " style="font-size:17.8px;color:#f4f4f4;top:387.37px;line-height:21.36px;letter-spacing:0.445px;left:966.5px;">Enfants à la maison:</span>
<div class="inp" style="top:341.0px;height:112.5px;"></div><span id="t39" class="t " style="font-size:17.8px;color:#111;top:349.62px;line-height:21.36px;letter-spacing:0.792px;left:1258px;">Non</span>
<div class="mb" style="left:1725px;top:341.5px;width:92.5px;height:110.0px;background:#427278;border-radius:2px;box-shadow:0 1px 0 #4a8d93"></div><div class="a" style="left:1726px;top:396.8px;width:90.5px;height:1.500px;background:#4d6468"></div><span id="t40" class="t " style="font-size:17.8px;color:#86a5a9;top:387.37px;line-height:21.36px;left:1771.25px;transform:translateX(-50%);">!</span><div class="mb" style="left:1820px;top:341.5px;width:92.5px;height:110.0px;background:#427278;border-radius:2px;box-shadow:0 1px 0 #4a8d93"></div><div class="a" style="left:1821px;top:396.8px;width:90.5px;height:1.500px;background:#4d6468"></div><span id="t41" class="t " style="font-size:17.8px;color:#86a5a9;top:387.37px;line-height:21.36px;letter-spacing:1.146px;left:1866.25px;transform:translateX(-50%);">MAJ</span>
<span id="t42" class="t " style="font-size:17.8px;color:#f4f4f4;top:462.37px;line-height:21.36px;letter-spacing:-0.121px;left:966.5px;">Gsm:</span>
<div class="inp" style="top:453.5px;height:37.5px;"></div><span id="t43" class="t " style="font-size:17.8px;color:#111;top:462.12px;line-height:21.36px;letter-spacing:0.252px;left:1258px;">0999/99.99.99</span>
<div class="mb" style="left:1725px;top:454.0px;width:92.5px;height:35.0px;background:#427278;border-radius:2px;box-shadow:0 1px 0 #4a8d93"></div><div class="a" style="left:1726px;top:471.8px;width:90.5px;height:1.500px;background:#4d6468"></div><span id="t44" class="t " style="font-size:17.8px;color:#86a5a9;top:462.37px;line-height:21.36px;left:1771.25px;transform:translateX(-50%);">!</span><div class="mb" style="left:1820px;top:454.0px;width:92.5px;height:35.0px;background:#427278;border-radius:2px;box-shadow:0 1px 0 #4a8d93"></div><div class="a" style="left:1821px;top:471.8px;width:90.5px;height:1.500px;background:#4d6468"></div><span id="t45" class="t " style="font-size:17.8px;color:#86a5a9;top:462.37px;line-height:21.36px;letter-spacing:1.146px;left:1866.25px;transform:translateX(-50%);">MAJ</span>
<span id="t46" class="t " style="font-size:17.8px;color:#f4f4f4;top:499.87px;line-height:21.36px;letter-spacing:0.294px;left:966.5px;">Téléphone fixe:</span>
<div class="inp" style="top:491.0px;height:37.5px;"></div><span id="t47" class="t " style="font-size:17.8px;color:#111;top:499.62px;line-height:21.36px;letter-spacing:0.264px;left:1258px;">099/99.99.99</span>
<div class="mb" style="left:1725px;top:491.5px;width:92.5px;height:35.0px;background:#427278;border-radius:2px;box-shadow:0 1px 0 #4a8d93"></div><div class="a" style="left:1726px;top:509.2px;width:90.5px;height:1.500px;background:#4d6468"></div><span id="t48" class="t " style="font-size:17.8px;color:#86a5a9;top:499.87px;line-height:21.36px;left:1771.25px;transform:translateX(-50%);">!</span><div class="mb" style="left:1820px;top:491.5px;width:92.5px;height:35.0px;background:#427278;border-radius:2px;box-shadow:0 1px 0 #4a8d93"></div><div class="a" style="left:1821px;top:509.2px;width:90.5px;height:1.500px;background:#4d6468"></div><span id="t49" class="t " style="font-size:17.8px;color:#86a5a9;top:499.87px;line-height:21.36px;letter-spacing:1.146px;left:1866.25px;transform:translateX(-50%);">MAJ</span>
<span id="t50" class="t " style="font-size:17.8px;color:#f4f4f4;top:162.12px;line-height:21.36px;letter-spacing:0.445px;left:1740px;">Format</span>
<span id="t51" class="t " style="font-size:17.8px;color:#f4f4f4;top:162.12px;line-height:21.36px;letter-spacing:0.206px;left:1819px;">aaaa-mm-jj</span>
</div></div>
<span id="t52" class="t " style="font-size:19.4px;color:#fff;top:535.16px;line-height:23.28px;letter-spacing:0.183px;left:966.5px;">Infos sur la personne crainte</span>
<div class="a" style="left:966px;top:563.500px;width:947px;height:406.500px;overflow:hidden">
<div class="a" style="left:-966px;top:-563.500px;width:1920px;height:1080px">
<span id="t53" class="t " style="font-size:17.8px;color:#f4f4f4;top:579.37px;line-height:21.36px;letter-spacing:0.629px;left:966.5px;">Nom:</span>
<div class="inp" style="top:570.5px;height:37.5px;"></div><span id="t54" class="t " style="font-size:17.8px;color:#111;top:579.12px;line-height:21.36px;letter-spacing:-0.358px;left:1258px;">ESTSUSPECT</span>
<div class="mb" style="left:1725px;top:571.0px;width:92.5px;height:35.0px;background:#187277;border-radius:2px;box-shadow:0 1px 0 #1f8489"></div><div class="a" style="left:1726px;top:588.8px;width:90.5px;height:1.500px;background:#2a6669"></div><span id="t55" class="t " style="font-size:17.8px;color:#5f9fa2;top:579.37px;line-height:21.36px;left:1771.25px;transform:translateX(-50%);">!</span><div class="mb" style="left:1820px;top:571.0px;width:92.5px;height:35.0px;background:#187277;border-radius:2px;box-shadow:0 1px 0 #1f8489"></div><div class="a" style="left:1821px;top:588.8px;width:90.5px;height:1.500px;background:#2a6669"></div><span id="t56" class="t " style="font-size:17.8px;color:#5f9fa2;top:579.37px;line-height:21.36px;letter-spacing:1.146px;left:1866.25px;transform:translateX(-50%);">MAJ</span>
<span id="t57" class="t " style="font-size:17.8px;color:#f4f4f4;top:616.87px;line-height:21.36px;letter-spacing:0.257px;left:966.5px;">Prénom:</span>
<div class="inp" style="top:608.0px;height:37.5px;"></div><span id="t58" class="t " style="font-size:17.8px;color:#111;top:616.62px;line-height:21.36px;letter-spacing:0.609px;left:1258px;">Jean</span>
<div class="mb" style="left:1725px;top:608.5px;width:92.5px;height:35.0px;background:#187277;border-radius:2px;box-shadow:0 1px 0 #1f8489"></div><div class="a" style="left:1726px;top:626.2px;width:90.5px;height:1.500px;background:#2a6669"></div><span id="t59" class="t " style="font-size:17.8px;color:#5f9fa2;top:616.87px;line-height:21.36px;left:1771.25px;transform:translateX(-50%);">!</span><div class="mb" style="left:1820px;top:608.5px;width:92.5px;height:35.0px;background:#187277;border-radius:2px;box-shadow:0 1px 0 #1f8489"></div><div class="a" style="left:1821px;top:626.2px;width:90.5px;height:1.500px;background:#2a6669"></div><span id="t60" class="t " style="font-size:17.8px;color:#5f9fa2;top:616.87px;line-height:21.36px;letter-spacing:1.146px;left:1866.25px;transform:translateX(-50%);">MAJ</span>
<span id="t61" class="t " style="font-size:17.8px;color:#f4f4f4;top:654.37px;line-height:21.36px;letter-spacing:0.366px;left:966.5px;">Date naissance:</span>
<div class="inp" style="top:645.5px;height:37.5px;"></div><span id="t62" class="t " style="font-size:17.8px;color:#111;top:654.12px;line-height:21.36px;letter-spacing:0.600px;left:1258px;">04/02/1980</span>
<div class="mb" style="left:1725px;top:646.0px;width:92.5px;height:35.0px;background:#187277;border-radius:2px;box-shadow:0 1px 0 #1f8489"></div><div class="a" style="left:1726px;top:663.8px;width:90.5px;height:1.500px;background:#2a6669"></div><span id="t63" class="t " style="font-size:17.8px;color:#5f9fa2;top:654.37px;line-height:21.36px;left:1771.25px;transform:translateX(-50%);">!</span><div class="mb" style="left:1820px;top:646.0px;width:92.5px;height:35.0px;background:#187277;border-radius:2px;box-shadow:0 1px 0 #1f8489"></div><div class="a" style="left:1821px;top:663.8px;width:90.5px;height:1.500px;background:#2a6669"></div><span id="t64" class="t " style="font-size:17.8px;color:#5f9fa2;top:654.37px;line-height:21.36px;letter-spacing:1.146px;left:1866.25px;transform:translateX(-50%);">MAJ</span>
<div class="a" style="left:966px;top:684.0px;width:284px;height:35px;background:#5a5a5a;border-radius:2px;box-shadow:0 1px 1px rgba(0,0,0,.35)"></div>
<span id="t65" class="t " style="font-size:17.8px;color:#f4f4f4;top:691.87px;line-height:21.36px;letter-spacing:0.354px;left:966.5px;">Adresse:</span>
<div class="inp" style="top:683.0px;height:37.5px;"></div><span id="t66" class="t " style="font-size:17.8px;color:#111;top:691.62px;line-height:21.36px;letter-spacing:0.057px;left:1258px;">Place de Haine-Saint-Paul 7100 LA LOUVIERE</span>
<div class="mb" style="left:1725px;top:683.5px;width:92.5px;height:35.0px;background:#187277;border-radius:2px;box-shadow:0 1px 0 #1f8489"></div><div class="a" style="left:1726px;top:701.2px;width:90.5px;height:1.500px;background:#2a6669"></div><span id="t67" class="t " style="font-size:17.8px;color:#5f9fa2;top:691.87px;line-height:21.36px;left:1771.25px;transform:translateX(-50%);">!</span><div class="mb" style="left:1820px;top:683.5px;width:92.5px;height:35.0px;background:#187277;border-radius:2px;box-shadow:0 1px 0 #1f8489"></div><div class="a" style="left:1821px;top:701.2px;width:90.5px;height:1.500px;background:#2a6669"></div><span id="t68" class="t " style="font-size:17.8px;color:#5f9fa2;top:691.87px;line-height:21.36px;letter-spacing:1.146px;left:1866.25px;transform:translateX(-50%);">MAJ</span>
<span id="t69" class="t " style="font-size:17.8px;color:#f4f4f4;top:729.37px;line-height:21.36px;letter-spacing:-0.121px;left:966.5px;">Gsm:</span>
<div class="inp" style="top:720.5px;height:37.5px;"></div><span id="t70" class="t " style="font-size:17.8px;color:#111;top:729.12px;line-height:21.36px;letter-spacing:0.252px;left:1258px;">0888/88.88.88</span>
<div class="mb" style="left:1725px;top:721.0px;width:92.5px;height:35.0px;background:#187277;border-radius:2px;box-shadow:0 1px 0 #1f8489"></div><div class="a" style="left:1726px;top:738.8px;width:90.5px;height:1.500px;background:#2a6669"></div><span id="t71" class="t " style="font-size:17.8px;color:#5f9fa2;top:729.37px;line-height:21.36px;left:1771.25px;transform:translateX(-50%);">!</span><div class="mb" style="left:1820px;top:721.0px;width:92.5px;height:35.0px;background:#187277;border-radius:2px;box-shadow:0 1px 0 #1f8489"></div><div class="a" style="left:1821px;top:738.8px;width:90.5px;height:1.500px;background:#2a6669"></div><span id="t72" class="t " style="font-size:17.8px;color:#5f9fa2;top:729.37px;line-height:21.36px;letter-spacing:1.146px;left:1866.25px;transform:translateX(-50%);">MAJ</span>
<span id="t73" class="t " style="font-size:17.8px;color:#f4f4f4;top:766.87px;line-height:21.36px;letter-spacing:0.294px;left:966.5px;">Téléphone fixe:</span>
<div class="inp" style="top:758.0px;height:37.5px;"></div><span id="t74" class="t " style="font-size:17.8px;color:#111;top:766.62px;line-height:21.36px;letter-spacing:0.264px;left:1258px;">088/88.88.88</span>
<div class="mb" style="left:1725px;top:758.5px;width:92.5px;height:35.0px;background:#187277;border-radius:2px;box-shadow:0 1px 0 #1f8489"></div><div class="a" style="left:1726px;top:776.2px;width:90.5px;height:1.500px;background:#2a6669"></div><span id="t75" class="t " style="font-size:17.8px;color:#5f9fa2;top:766.87px;line-height:21.36px;left:1771.25px;transform:translateX(-50%);">!</span><div class="mb" style="left:1820px;top:758.5px;width:92.5px;height:35.0px;background:#187277;border-radius:2px;box-shadow:0 1px 0 #1f8489"></div><div class="a" style="left:1821px;top:776.2px;width:90.5px;height:1.500px;background:#2a6669"></div><span id="t76" class="t " style="font-size:17.8px;color:#5f9fa2;top:766.87px;line-height:21.36px;letter-spacing:1.146px;left:1866.25px;transform:translateX(-50%);">MAJ</span>
<span id="t77" class="t " style="font-size:17.8px;color:#f4f4f4;top:804.37px;line-height:21.36px;letter-spacing:0.432px;left:966.5px;">Email:</span>
<div class="inp" style="top:795.5px;height:37.5px;"></div><span id="t78" class="t " style="font-size:17.8px;color:#111;top:804.12px;line-height:21.36px;letter-spacing:0.475px;left:1258px;">suspect@justice.be</span>
<div class="mb" style="left:1725px;top:796.0px;width:92.5px;height:35.0px;background:#187277;border-radius:2px;box-shadow:0 1px 0 #1f8489"></div><div class="a" style="left:1726px;top:813.8px;width:90.5px;height:1.500px;background:#2a6669"></div><span id="t79" class="t " style="font-size:17.8px;color:#5f9fa2;top:804.37px;line-height:21.36px;left:1771.25px;transform:translateX(-50%);">!</span><div class="mb" style="left:1820px;top:796.0px;width:92.5px;height:35.0px;background:#187277;border-radius:2px;box-shadow:0 1px 0 #1f8489"></div><div class="a" style="left:1821px;top:813.8px;width:90.5px;height:1.500px;background:#2a6669"></div><span id="t80" class="t " style="font-size:17.8px;color:#5f9fa2;top:804.37px;line-height:21.36px;letter-spacing:1.146px;left:1866.25px;transform:translateX(-50%);">MAJ</span>
<span id="t81" class="t " style="font-size:17.8px;color:#f4f4f4;top:860.62px;line-height:21.36px;letter-spacing:0.435px;left:966.5px;">Arme(s) RCA/signalée(s):</span>
<div class="inp" style="top:833.0px;height:75.0px;"></div>
<span id="t82" class="t " style="font-size:17.8px;color:#111;top:841.62px;line-height:21.36px;letter-spacing:0.431px;left:1258px;">Aurait un opinel dans la portière conducteur de sa</span>
<span id="t83" class="t " style="font-size:17.8px;color:#111;top:864.12px;line-height:21.36px;letter-spacing:0.375px;left:1258px;">voiture</span>
<div class="mb" style="left:1725px;top:833.5px;width:92.5px;height:72.5px;background:#187277;border-radius:2px;box-shadow:0 1px 0 #1f8489"></div><div class="a" style="left:1726px;top:870.0px;width:90.5px;height:1.500px;background:#2a6669"></div><span id="t84" class="t " style="font-size:17.8px;color:#5f9fa2;top:860.62px;line-height:21.36px;left:1771.25px;transform:translateX(-50%);">!</span><div class="mb" style="left:1820px;top:833.5px;width:92.5px;height:72.5px;background:#187277;border-radius:2px;box-shadow:0 1px 0 #1f8489"></div><div class="a" style="left:1821px;top:870.0px;width:90.5px;height:1.500px;background:#2a6669"></div><span id="t85" class="t " style="font-size:17.8px;color:#5f9fa2;top:860.62px;line-height:21.36px;letter-spacing:1.146px;left:1866.25px;transform:translateX(-50%);">MAJ</span>
<span id="t86" class="t " style="font-size:17.8px;color:#f4f4f4;top:954.37px;line-height:21.36px;letter-spacing:0.471px;left:966.5px;">Complice(s) éventuel(s):</span>
<div class="inp" style="top:908.0px;height:112.5px;background:linear-gradient(#fff,#f4f4f4);"></div>
<span id="t87" class="t " style="font-size:17.8px;color:#111;top:916.62px;line-height:21.36px;letter-spacing:0.792px;left:1258px;">Non</span>
<div class="a" style="left:1292px;top:916.0px;width:1.500px;height:21px;background:#e02020"></div>
<div class="mb" style="left:1725px;top:908.5px;width:92.5px;height:110.0px;background:#187277;border-radius:2px;box-shadow:0 1px 0 #1f8489"></div><div class="a" style="left:1726px;top:963.8px;width:90.5px;height:1.500px;background:#2a6669"></div><span id="t88" class="t " style="font-size:17.8px;color:#5f9fa2;top:954.37px;line-height:21.36px;left:1771.25px;transform:translateX(-50%);">!</span><div class="mb" style="left:1820px;top:908.5px;width:92.5px;height:110.0px;background:#187277;border-radius:2px;box-shadow:0 1px 0 #1f8489"></div><div class="a" style="left:1821px;top:963.8px;width:90.5px;height:1.500px;background:#2a6669"></div><span id="t89" class="t " style="font-size:17.8px;color:#5f9fa2;top:954.37px;line-height:21.36px;letter-spacing:1.146px;left:1866.25px;transform:translateX(-50%);">MAJ</span>
</div></div>
<div class="a" style="left:961px;top:81px;width:957px;height:894.500px;box-sizing:border-box;border:5px solid #ee1c25"></div>
<div class="a g" style="left:961px;top:975.500px;width:318px;height:43px"></div><span id="t90" class="t " style="font-size:18.6px;color:#f2f2f2;top:985.64px;line-height:22.32px;letter-spacing:-1.266px;left:1120.0px;transform:translateX(-50%);">REFRESH</span>
<div class="a g" style="left:1281px;top:975.500px;width:318px;height:43px"></div><span id="t91" class="t " style="font-size:18.6px;color:#f2f2f2;top:985.64px;line-height:22.32px;letter-spacing:-0.826px;left:1440.0px;transform:translateX(-50%);">AJOUTER</span>
<div class="a g" style="left:1601px;top:975.500px;width:317px;height:43px"></div><span id="t92" class="t " style="font-size:18.6px;color:#f2f2f2;top:985.64px;line-height:22.32px;letter-spacing:-0.738px;left:1759.5px;transform:translateX(-50%);">MODIFIER</span>
<div class="a" style="left:0;top:1020px;width:1920px;height:60px;background:#1c1c1c"></div>
<svg style="left:24px;top:1034px" width="34" height="34" viewBox="0 0 34 34">
<path d="M2 17C3 9.500 9 6.500 14.500 7.500C21 8.500 26 13 26.500 20C24 18 21.500 18 19.800 19.800C18 17.500 15 17 13.200 18.800C11 16 8 15.500 6 17.500C4.800 16.500 3.200 16.300 2 17Z" fill="#3d9be0"/>
<path d="M14 8L12.300 27a3 3 0 0 1-5.500 1" fill="none" stroke="#9a9a9a" stroke-width="1.600" stroke-linecap="round"/>
<g stroke="#4aa8ee" stroke-width="1.700" stroke-linecap="round"><path d="M18.500 2.500l-1.200 2.200M23.500 3.500l-1.200 2.200M28 6.500l-1.200 2.200M30.500 11l-1.200 2.200"/></g></svg>
<span id="t93" class="t " style="font-size:14.6px;color:#fff;top:1032.54px;line-height:17.52px;letter-spacing:-0.652px;left:65px;">17°C</span>
<span id="t94" class="t " style="font-size:14.6px;color:#e4e4e4;top:1052.54px;line-height:17.52px;letter-spacing:0.375px;left:65px;">Il pleut</span>
<svg style="left:503.0px;top:1033.0px" width="34" height="34" viewBox="-17.0 -17.0 34 34"><defs><linearGradient id="wg" x1="0" y1="0" x2="1" y2="1"><stop offset="0" stop-color="#6fd3fb"/><stop offset="1" stop-color="#14a0ea"/></linearGradient></defs><g fill="url(#wg)"><rect x="-14" y="-14" width="13.300" height="13.300" rx="1"/><rect x="0.700" y="-14" width="13.300" height="13.300" rx="1"/><rect x="-14" y="0.700" width="13.300" height="13.300" rx="1"/><rect x="0.700" y="0.700" width="13.300" height="13.300" rx="1"/></g></svg>
<svg style="left:558.0px;top:1033.0px" width="34" height="34" viewBox="-17.0 -17.0 34 34"><circle cx="2.500" cy="-3" r="9.300" fill="#3a3a3a" stroke="#f0f0f0" stroke-width="3.200"/><path d="M-4.500 4.500L-11.500 12" stroke="#e8e8e8" stroke-width="3.600" stroke-linecap="round"/></svg>
<svg style="left:614.0px;top:1033.0px" width="34" height="34" viewBox="-17.0 -17.0 34 34"><rect x="-5" y="-13" width="18" height="18" rx="2" fill="#e2e2e2"/><rect x="-14" y="-5" width="19" height="18" rx="2" fill="#8a8a8a" opacity=".92"/><rect x="-5" y="-5" width="10" height="10" fill="#b4b4b4"/></svg>
<svg style="left:669.0px;top:1033.0px" width="34" height="34" viewBox="-17.0 -17.0 34 34"><defs><linearGradient id="cg" x1="0" y1="0" x2="1" y2="1"><stop offset="0" stop-color="#8b7fe8"/><stop offset="1" stop-color="#5a50c0"/></linearGradient></defs><path d="M0-14a14 13.500 0 1 1-6 25.700L-13.500 14l1.800-7.500A13.500 13.500 0 0 1 0-14Z" fill="url(#cg)"/><rect x="-8" y="-5" width="11" height="9.500" rx="2" fill="#fff"/><path d="M3.500-1.500L8.500-5v9.500L3.500 1Z" fill="#fff"/></svg>
<svg style="left:723.0px;top:1033.0px" width="34" height="34" viewBox="-17.0 -17.0 34 34"><path d="M-6-9v-3.500a2 2 0 0 1 2-2h8a2 2 0 0 1 2 2V-9" fill="none" stroke="#35b3f2" stroke-width="2"/><path d="M-14-9.500H14V11a3.500 3.500 0 0 1-3.500 3.500h-21A3.500 3.500 0 0 1-14 11Z" fill="#f3f3f3"/><rect x="-5.500" y="-4" width="5" height="5" fill="#f25022"/><rect x=".5" y="-4" width="5" height="5" fill="#7fba00"/><rect x="-5.500" y="2" width="5" height="5" fill="#00a4ef"/><rect x=".5" y="2" width="5" height="5" fill="#ffb900"/></svg>
<svg style="left:779.0px;top:1033.0px" width="34" height="34" viewBox="-17.0 -17.0 34 34"><path d="M-15-12.500h9l3 3H13a2 2 0 0 1 2 2V10a2 2 0 0 1-2 2H-13a2 2 0 0 1-2-2Z" fill="#e8a92c"/><path d="M-15-7H15V10.500a2 2 0 0 1-2 2H-13a2 2 0 0 1-2-2Z" fill="#fcd55a"/><path d="M-9 5.500h18v7H-9Z" fill="#1a86d8"/><rect x="-5" y="8" width="10" height="2" rx="1" fill="#0d5ea8"/></svg>
<svg style="left:834.0px;top:1033.0px" width="34" height="34" viewBox="-17.0 -17.0 34 34"><circle r="13.500" fill="#fff"/><rect x="-6.500" y="-6.500" width="13" height="13" rx="2" fill="#4285f4"/><path d="M-5-6.500a5 4 0 0 1 10 0Z" fill="#3ddc84"/><text x="0" y="5.500" font-family="Liberation Sans,sans-serif" font-size="10" font-weight="bold" fill="#0b2a55" text-anchor="middle">AI</text></svg>
<svg style="left:888.0px;top:1033.0px" width="34" height="34" viewBox="-17.0 -17.0 34 34"><rect x="-14.500" y="-14.500" width="29" height="29" fill="#b30a0a" stroke="#8c0606" stroke-width="1" stroke-dasharray="2 1"/><text x="-0.500" y="9" font-family="Liberation Sans,sans-serif" font-size="25" font-weight="bold" font-style="italic" fill="#fff" text-anchor="middle" letter-spacing="-2">Fz</text></svg>
<svg style="left:944.0px;top:1033.0px" width="34" height="34" viewBox="-17.0 -17.0 34 34"><defs><linearGradient id="eg" x1="0" y1="0" x2="1" y2="0"><stop offset="0" stop-color="#1b9de2"/><stop offset=".6" stop-color="#35c1a8"/><stop offset="1" stop-color="#7bd64a"/></linearGradient></defs><circle r="14.500" fill="#0c59a4"/><path d="M-14.500 1A14.500 14.500 0 0 1 14.500-2c0 5-4 8-9 8-4 0-5-2.500-4-4.500C.5-3-5-4-9-.5c-3 2.500-4.500 2-5.500 1.500Z" fill="url(#eg)"/><path d="M-4 1c-3 5 1 12 9 12 4 0 7-2 8.500-4-5 3-13 1-13-5 0-1.500.5-2.500 1-3.500Z" fill="#1470c4"/><path d="M-13 5c2 6 8 10 15 9.500-6-1-10-6-9-11-2-1-5 0-6 1.500Z" fill="#2a8fe0"/></svg>
<svg style="left:997.0px;top:1031.0px" width="38" height="38" viewBox="-19.0 -19.0 38 38"><circle cx="-1" cy="1" r="13" fill="#1f9ede" stroke="#e9f5fc" stroke-width="1.800"/><text x="-1" y="9" font-family="Liberation Sans,sans-serif" font-size="23" font-weight="bold" fill="#fff" text-anchor="middle">?</text><circle cx="9.500" cy="-9" r="8" fill="#34b4f4"/><rect x="5" y="-12" width="9" height="6.500" rx="1" fill="none" stroke="#0b2f4a" stroke-width="1.200"/><path d="M5.300-11.500l4.200 3 4.200-3" fill="none" stroke="#0b2f4a" stroke-width="1.100"/></svg>
<svg style="left:1054.0px;top:1033.0px" width="34" height="34" viewBox="-17.0 -17.0 34 34"><path d="M6.500-15L15-11V11L6.500 15Z" fill="#1f9cf0"/><path d="M6.500-15L-9 0 6.500 15V8L-2.500 0 6.500-8Z" fill="#0f78cc"/><path d="M-15-5.500l2.500-2.500L6.500 8v7Z" fill="#2aa7f5"/><path d="M-15 5.500l2.500 2.500L6.500-8v-7Z" fill="#1888de"/></svg>
<svg style="left:1109.0px;top:1033.0px" width="34" height="34" viewBox="-17.0 -17.0 34 34"><rect x="-11.500" y="-13" width="23" height="27" rx="1.500" fill="#5cc3e6"/><rect x="-11.500" y="11" width="23" height="3.500" fill="#b0642a"/><rect x="-11.500" y="-13" width="23" height="4" fill="#2c9cc8"/><g stroke="#1a6e96" stroke-width="2"><path d="M-7-4.500H7M-7 0H7M-7 4.500H7"/></g><g fill="#1a5c7c"><circle cx="-8" cy="-13.500" r="1.500"/><circle cx="-2.700" cy="-13.500" r="1.500"/><circle cx="2.700" cy="-13.500" r="1.500"/><circle cx="8" cy="-13.500" r="1.500"/></g></svg>
<svg style="left:1163.0px;top:1033.0px" width="34" height="34" viewBox="-17.0 -17.0 34 34"><path d="M0-15L13-9.500V6L0 12-13 6V-9.500Z" fill="#2b4a8c"/><path d="M0-15L13-9.500 0-4-13-9.500Z" fill="#dfe6f2"/><path d="M0-12L8.500-9 0-5.500-8.500-9Z" fill="#1d3466"/><path d="M-13-9.500L0-4V12L-13 6Z" fill="#c9d4e8"/><path d="M-10.500-5L-2.500-1.500V8L-10.500 4.500Z" fill="#1d3466"/><path d="M2.500-1.500L10.500-5V4.500L2.500 8Z" fill="#16284f"/><ellipse cx="0" cy="13.500" rx="6" ry="2.200" fill="#aeb9cf"/></svg>
<svg style="left:1219.0px;top:1033.0px" width="34" height="34" viewBox="-17.0 -17.0 34 34"><rect x="-15" y="-15" width="30" height="30" rx="2" fill="#3a4150"/><path d="M-15 10C-6 8 0 0 3-7 5-12 9-14 15-14V-8C10-8 8-4 6 1 3 8-3 14-15 15Z" fill="#f5a623"/><path d="M6 15C8 9 11 4 15 2V15Z" fill="#f5a623"/><circle cx="-3" cy="-6" r="4.500" fill="#e8501c"/><rect x="-14.500" y="-14.500" width="12" height="8" fill="#f0f0f0"/><text x="-8.500" y="-8" font-family="Liberation Sans,sans-serif" font-size="7.500" font-weight="bold" fill="#222" text-anchor="middle">64</text></svg>
<svg style="left:1273.0px;top:1033.0px" width="34" height="34" viewBox="-17.0 -17.0 34 34"><rect x="-15" y="-11" width="30" height="22" rx="2" fill="#3c3c3c"/><rect x="-15" y="-11" width="30" height="4.500" fill="#7a7a7a"/><rect x="-15" y="-11" width="14" height="4.500" fill="#2a2a2a"/><path d="M-10.500-2.500L-4.500 2.500-10.500 7.500" fill="none" stroke="#eee" stroke-width="2.200"/><path d="M-2 7.500H8" stroke="#eee" stroke-width="2.200"/></svg>
<svg style="left:1328.0px;top:1033.0px" width="34" height="34" viewBox="-17.0 -17.0 34 34"><path d="M-1-14C8-14 14-8 14-1c0 5-4 6-7 5-3-1-5 1-4 4 1 4-2 6-6 5C-10 12-14 6-14 0-14-8-8-14-1-14Z" fill="#38a4e6"/><circle cx="-8" cy="-3" r="2.600" fill="#e8412c"/><circle cx="-3.500" cy="-9" r="2.600" fill="#ffc83d"/><circle cx="4" cy="-9" r="2.600" fill="#6cc04a"/><circle cx="-8" cy="5" r="2.600" fill="#f08a24"/><path d="M9.500-12h3.500l.5 8h-4.500Z" fill="#e8c48a"/><rect x="10" y="-4" width="2.800" height="19" fill="#a0642c"/></svg>
<div class="a" style="left:1376px;top:1025px;width:49px;height:50px;background:#2b2b2b;border-radius:5px;border:1px solid #353535;box-sizing:border-box"></div>
<svg style="left:1382.0px;top:1032.0px" width="36" height="36" viewBox="-18.0 -18.0 36 36"><rect x="-15" y="-14" width="26" height="22" fill="#2b3a4a"/><rect x="-15" y="-14" width="26" height="3.500" fill="#2f7fd0"/><g stroke="#3fae58" stroke-width="1.600"><path d="M-12-6H-5M-12-2H-7M-12 2H-5"/></g><path d="M3-5c-4 0-4 2-4 3.500V2H6v1H-3c-3 0-4 2.500-4 5s1 5 4 5H-1V10c0-2 1.500-3.500 3.500-3.500H8c2 0 3-1.500 3-3V-1.500C11-4 8-5 3-5Z" fill="#3b78a8"/><path d="M7 15c4 0 4-2 4-3.500V8H4V7h9c3 0 4-2.500 4-5s-1-5-4-5H11V0c0 2-1.500 3.500-3.500 3.500H2c-2 0-3 1.500-3 3V11.500C-1 14 2 15 7 15Z" fill="#ffd43b"/></svg>
<div class="a" style="left:792.5px;top:1070.500px;width:7px;height:3px;border-radius:1.500px;background:#8f8f8f"></div>
<div class="a" style="left:902.0px;top:1070.500px;width:7px;height:3px;border-radius:1.500px;background:#8f8f8f"></div>
<div class="a" style="left:957.0px;top:1070.500px;width:7px;height:3px;border-radius:1.500px;background:#8f8f8f"></div>
<div class="a" style="left:1067.5px;top:1070.500px;width:7px;height:3px;border-radius:1.500px;background:#8f8f8f"></div>
<div class="a" style="left:1122.2px;top:1070.500px;width:7px;height:3px;border-radius:1.500px;background:#8f8f8f"></div>
<div class="a" style="left:1177.5px;top:1070.500px;width:7px;height:3px;border-radius:1.500px;background:#8f8f8f"></div>
<div class="a" style="left:1231.9px;top:1070.500px;width:7px;height:3px;border-radius:1.500px;background:#8f8f8f"></div>
<div class="a" style="left:1286.9px;top:1070.500px;width:7px;height:3px;border-radius:1.500px;background:#8f8f8f"></div>
<div class="a" style="left:1342.2px;top:1070.500px;width:7px;height:3px;border-radius:1.500px;background:#8f8f8f"></div>
<div class="a" style="left:1391px;top:1070.500px;width:19px;height:3px;border-radius:1.500px;background:#4cc2ff"></div>
<svg style="left:1560px;top:1030px" width="240" height="40" viewBox="1560 1030 240 40" fill="none" stroke="#fff" stroke-width="1.300" stroke-linecap="round" stroke-linejoin="round"><path d="M1566 1053.500L1573.500 1046L1581 1053.500"/><path d="M1607 1056h14a4 4 0 0 0 .5-8 5 5 0 0 0-9-1.500 4.500 4.500 0 0 0-5.500 9.500Z" fill="#d9d9d9" stroke="none"/><path d="M1611 1047.500a5 5 0 0 1 7.500-3 5 5 0 0 1 2 3" fill="#a8a8a8" stroke="none"/><path d="M1700 1046.500a13 13 0 0 1 18 0M1703 1050a9 9 0 0 1 12 0M1706 1053.300a4.700 4.700 0 0 1 6 0" stroke-width="1.700"/><circle cx="1709" cy="1056.200" r="1.300" fill="#fff" stroke="none"/><path d="M1730 1047.500h3l4-3.500v13l-4-3.500h-3Z"/><path d="M1740 1047.500a4.500 4.500 0 0 1 0 6M1742.800 1045a8 8 0 0 1 0 11"/><path d="M1745.500 1042.500a11.500 11.500 0 0 1 0 16" stroke="#777"/><rect x="1760" y="1044.500" width="16" height="11" rx="2.500" stroke-width="1.500"/><path d="M1777.500 1048.500v3" stroke-width="2"/><rect x="1762.300" y="1046.800" width="3.500" height="6.400" rx=".8" fill="#fff" stroke="none"/></svg>
<span id="t95" class="t " style="font-size:14.6px;color:#fff;top:1032.04px;line-height:17.52px;letter-spacing:-1.062px;left:1661px;transform:translateX(-50%);">FRA</span>
<span id="t96" class="t " style="font-size:14.6px;color:#fff;top:1052.54px;line-height:17.52px;letter-spacing:-1.730px;left:1661px;transform:translateX(-50%);">BEFR</span>
<span id="t97" class="t " style="font-size:14.6px;color:#fff;top:1031.54px;line-height:17.52px;letter-spacing:-1.106px;left:1861.5px;transform:translateX(-100%);">12:17</span>
<span id="t98" class="t " style="font-size:14.6px;color:#fff;top:1052.04px;line-height:17.52px;letter-spacing:0.322px;left:1861.5px;transform:translateX(-100%);">05-06-22</span>
<div class="a" style="left:1876px;top:1040px;width:20px;height:20px;border-radius:10px;background:#4cc2ff"></div>
<span id="t99" class="t " style="font-size:13.6px;color:#111;top:1043.14px;line-height:16.32px;left:1886px;transform:translateX(-50%);">2</span>
</div>
</body></html>
